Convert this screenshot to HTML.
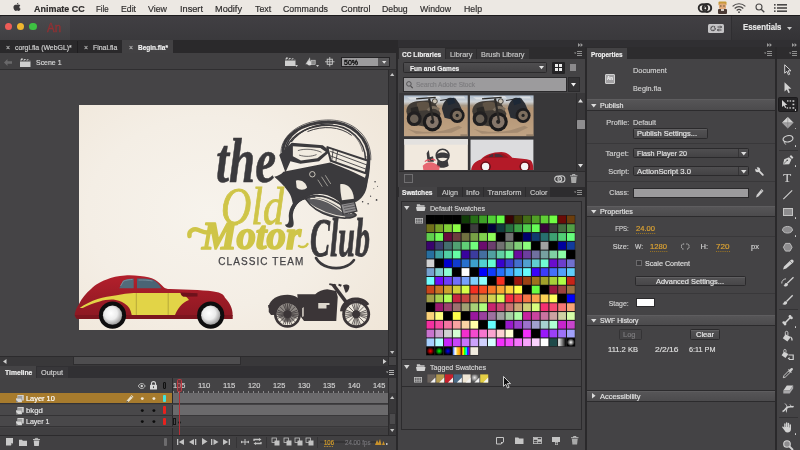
<!DOCTYPE html>
<html><head><meta charset="utf-8"><title>Animate CC</title>
<style>
html,body{margin:0;padding:0;}
body{width:800px;height:450px;overflow:hidden;position:relative;background:#444345;font-family:"Liberation Sans",sans-serif;font-size:7px;color:#d8d8d8;}
.a{position:absolute;box-sizing:border-box;}
.t{position:absolute;white-space:nowrap;line-height:1;-webkit-text-stroke:.18px currentColor;}
#root{position:absolute;left:0;top:0;width:800px;height:450px;overflow:hidden;will-change:transform;}
.b{font-weight:bold;}
svg{position:absolute;overflow:visible;}
.hdr{position:absolute;height:11px;background:linear-gradient(#565557,#4c4b4d);border-top:1px solid #5e5d5f;border-bottom:1px solid #2c2b2d;box-sizing:border-box;}
.btn{position:absolute;box-sizing:border-box;background:linear-gradient(#535254,#474648);border:1px solid #2b2a2c;border-radius:1.5px;box-shadow:inset 0 1px 0 #605f61;}
.dd{position:absolute;box-sizing:border-box;background:linear-gradient(#4f4e50,#434244);border:1px solid #2b2a2c;border-radius:1.5px;}
.ln{position:absolute;height:1px;background:#39383a;}
</style></head><body><div id="root">

<div class="a" style="left:0;top:0;width:800px;height:15px;background:#ece8e3;"></div>
<svg style="left:12.500px;top:2px;" width="8" height="10" viewBox="0 0 9 10"><path d="M6.1 0.2c0 .9-.8 1.9-1.7 1.9C4.3 1.2 5.200 .3 6.100 .2zM4.500 2.600c.5 0 1-.4 1.800-.4.7 0 1.400.3 1.900 1C6.700 4.100 6.900 6.300 8.500 6.900c-.3.900-1.100 2.500-2.100 2.500-.6 0-.9-.4-1.700-.4-.8 0-1.100.4-1.700.4C1.800 9.400.5 7.100.5 5.300.5 3.500 1.700 2.400 2.800 2.400c.7 0 1.300.2 1.700.2z" fill="#3c3a3b"/></svg>
<span class="t b" style="left:33.75px;top:3.78px;font-size:9.60px;color:#2e2c2c;transform:scaleX(0.933);transform-origin:0 50%;">Animate CC</span>
<span class="t" style="left:96.25px;top:3.78px;font-size:9.60px;color:#2e2c2c;transform:scaleX(0.824);transform-origin:0 50%;">File</span>
<span class="t" style="left:121.00px;top:3.78px;font-size:9.60px;color:#2e2c2c;transform:scaleX(0.907);transform-origin:0 50%;">Edit</span>
<span class="t" style="left:148.00px;top:3.78px;font-size:9.60px;color:#2e2c2c;transform:scaleX(0.921);transform-origin:0 50%;">View</span>
<span class="t" style="left:179.50px;top:3.78px;font-size:9.60px;color:#2e2c2c;transform:scaleX(0.958);transform-origin:0 50%;">Insert</span>
<span class="t" style="left:215.00px;top:3.78px;font-size:9.60px;color:#2e2c2c;transform:scaleX(0.955);transform-origin:0 50%;">Modify</span>
<span class="t" style="left:254.50px;top:3.78px;font-size:9.60px;color:#2e2c2c;transform:scaleX(0.923);transform-origin:0 50%;">Text</span>
<span class="t" style="left:283.00px;top:3.78px;font-size:9.60px;color:#2e2c2c;transform:scaleX(0.917);transform-origin:0 50%;">Commands</span>
<span class="t" style="left:340.50px;top:3.78px;font-size:9.60px;color:#2e2c2c;transform:scaleX(0.953);transform-origin:0 50%;">Control</span>
<span class="t" style="left:381.75px;top:3.78px;font-size:9.60px;color:#2e2c2c;transform:scaleX(0.910);transform-origin:0 50%;">Debug</span>
<span class="t" style="left:420.00px;top:3.78px;font-size:9.60px;color:#2e2c2c;transform:scaleX(0.908);transform-origin:0 50%;">Window</span>
<span class="t" style="left:463.75px;top:3.78px;font-size:9.60px;color:#2e2c2c;transform:scaleX(0.912);transform-origin:0 50%;">Help</span>
<svg style="left:698px;top:3px;" width="14" height="10" viewBox="0 0 14 10"><ellipse cx="5" cy="5" rx="4.3" ry="3.800" fill="none" stroke="#2c2a2a" stroke-width="1.900"/><ellipse cx="9" cy="5" rx="4.200" ry="4" fill="none" stroke="#2c2a2a" stroke-width="2"/><circle cx="7.500" cy="5.200" r="1.600" fill="none" stroke="#2c2a2a" stroke-width="1.100"/></svg>
<svg style="left:717px;top:1px;" width="11" height="13" viewBox="0 0 11 13"><rect x="1.500" y="0.500" width="8" height="4" rx="1" fill="#c89a3a"/><rect x="2" y="2.500" width="7" height="5.500" rx="1.500" fill="#e0a878"/><rect x="1" y="8" width="9" height="5" rx="1" fill="#4a3a34"/><rect x="3.200" y="4.500" width="1.200" height="1" fill="#332"/><rect x="6.400" y="4.500" width="1.200" height="1" fill="#332"/><rect x="4" y="8" width="3" height="2" fill="#d8d0c8"/></svg>
<svg style="left:732px;top:3px;" width="14" height="10" viewBox="0 0 14 10"><path d="M0.600 3.400A9 9 0 0 1 13.400 3.400" fill="none" stroke="#4a4848" stroke-width="1.200"/><path d="M2.700 5.500A6 6 0 0 1 11.300 5.500" fill="none" stroke="#4a4848" stroke-width="1.200"/><path d="M4.700 7.500A3.300 3.300 0 0 1 9.300 7.500" fill="none" stroke="#4a4848" stroke-width="1.200"/><circle cx="7" cy="9.200" r=".9" fill="#4a4848"/></svg>
<svg style="left:755px;top:3px;" width="10" height="10" viewBox="0 0 10 10"><circle cx="4" cy="4" r="3" fill="none" stroke="#4a4848" stroke-width="1.100"/><path d="M6.200 6.200L9.300 9.300" stroke="#4a4848" stroke-width="1.300"/></svg>
<svg style="left:773.500px;top:4px;" width="13" height="8" viewBox="0 0 13 8"><g fill="#4a4848"><rect x="0" y="0" width="1.600" height="1.600"/><rect x="3" y="0" width="10" height="1.600"/><rect x="0" y="3.200" width="1.600" height="1.600"/><rect x="3" y="3.200" width="10" height="1.600"/><rect x="0" y="6.400" width="1.600" height="1.600"/><rect x="3" y="6.400" width="10" height="1.600"/></g></svg>
<div class="a" style="left:0;top:15px;width:800px;height:25px;background:linear-gradient(#413f43,#3a393c);border-top:1px solid #1c1b1d;"></div>
<div class="a" style="left:0;top:16px;width:70px;height:24px;background:linear-gradient(#4b4a4d,#403f42);border-top-left-radius:3px;"></div>
<div class="a" style="left:731px;top:16px;width:69px;height:24px;background:linear-gradient(#3c3b3e,#343336);border-left:1px solid #2f2e31;border-top-right-radius:3px;"></div>
<div class="a" style="left:4.5px;top:22.600px;width:7.800px;height:7.800px;border-radius:50%;background:#ee5c57;"></div>
<div class="a" style="left:16.7px;top:22.600px;width:7.800px;height:7.800px;border-radius:50%;background:#f0b62e;"></div>
<div class="a" style="left:29.2px;top:22.600px;width:7.800px;height:7.800px;border-radius:50%;background:#3ec242;"></div>
<span class="t" style="left:47.00px;top:21.72px;font-size:12.60px;color:#933033;transform:scaleX(0.908);transform-origin:0 50%;-webkit-text-stroke:.35px #933033;">An</span>
<svg style="left:708px;top:23.500px;" width="16" height="9" viewBox="0 0 16 9"><rect x="0" y="0" width="16" height="9" rx="1.500" fill="#c4c3c5"/><circle cx="5" cy="4.500" r="2.100" fill="none" stroke="#3a393b" stroke-width="1.300" stroke-dasharray="1.100 .55"/><path d="M9.500 3h4M12.300 1.700l1.300 1.300-1.300 1.300M13.500 6h-4M10.700 4.700L9.400 6l1.300 1.300" stroke="#3a393b" stroke-width=".9" fill="none"/></svg>
<span class="t b" style="left:742.50px;top:24.06px;font-size:8.20px;color:#e6e6e6;transform:scaleX(0.949);transform-origin:0 50%;">Essentials</span>
<svg style="left:787px;top:27px;" width="5" height="3" viewBox="0 0 5 3"><path d="M0 0h5L2.500 3z" fill="#c8c8c8"/></svg>
<div class="a" style="left:0px;top:40px;width:800px;height:8.2px;background:#302f32;border-bottom:1px solid #222123;"></div>
<div class="a" style="left:0px;top:40px;width:398px;height:13px;background:#2a292b;"></div>
<div class="a" style="left:122px;top:40px;width:50.5px;height:13px;background:#424143;"></div>
<div class="a" style="left:77px;top:40.5px;width:1px;height:12.5px;background:#1f1e20;"></div>
<span class="t" style="left:6.00px;top:44.69px;font-size:6.50px;color:#bdbdbd;transform:scaleX(1.054);transform-origin:0 50%;">×</span>
<span class="t" style="left:15.00px;top:43.80px;font-size:7.50px;color:#d2d2d2;transform:scaleX(0.922);transform-origin:0 50%;">corgi.fla (WebGL)*</span>
<span class="t" style="left:83.50px;top:44.69px;font-size:6.50px;color:#bdbdbd;transform:scaleX(1.054);transform-origin:0 50%;">×</span>
<span class="t" style="left:92.50px;top:43.80px;font-size:7.50px;color:#d2d2d2;transform:scaleX(0.923);transform-origin:0 50%;">Final.fla</span>
<span class="t" style="left:128.50px;top:44.69px;font-size:6.50px;color:#bdbdbd;transform:scaleX(1.054);transform-origin:0 50%;">×</span>
<span class="t b" style="left:138.00px;top:43.80px;font-size:7.50px;color:#f2f2f2;transform:scaleX(0.867);transform-origin:0 50%;">Begin.fla*</span>
<svg style="left:578px;top:42.500px;" width="5" height="4" viewBox="0 0 5 4"><path d="M0 0l2.300 2L0 4zM2.600 0l2.300 2-2.300 2z" fill="#9c9c9c"/></svg>
<svg style="left:767px;top:42.500px;" width="5" height="4" viewBox="0 0 5 4"><path d="M0 0l2.300 2L0 4zM2.600 0l2.300 2-2.300 2z" fill="#9c9c9c"/></svg>
<svg style="left:792px;top:42.500px;" width="5" height="4" viewBox="0 0 5 4"><path d="M0 0l2.300 2L0 4zM2.600 0l2.300 2-2.300 2z" fill="#9c9c9c"/></svg>
<div class="a" style="left:0px;top:53px;width:398px;height:17px;background:#414042;border-bottom:1px solid #2f2e30;"></div>
<svg style="left:3.500px;top:59px;" width="8" height="7" viewBox="0 0 8 7"><path d="M0 3.500L3.500 0v2.200H8v2.600H3.500V7z" fill="#6a696b"/></svg>
<svg style="left:20px;top:58px;" width="10.500" height="9" viewBox="0 0 10.500 9"><g fill="#cfcfcf"><path d="M0 3.200h10.500V9H0z"/><path d="M0 2.600L1.500 .3l1.700.5L2 2.600zM3 2.600L4.400 .9l1.700.4-1.200 1.300zM6 2.600l1.300-1.300 1.700.4-1 .9zM9 2.600l1-.7.500.700z"/></g><path d="M0 3.200h10.500" stroke="#414042" stroke-width=".5"/></svg>
<span class="t" style="left:36.25px;top:58.80px;font-size:7.50px;color:#d6d6d6;transform:scaleX(0.927);transform-origin:0 50%;">Scene 1</span>
<svg style="left:284.500px;top:57px;" width="10.500" height="9" viewBox="0 0 10.500 9"><g fill="#cfcfcf"><path d="M0 3.200h10.500V9H0z"/><path d="M0 2.600L1.500 .3l1.700.5L2 2.600zM3 2.600L4.400 .9l1.700.4-1.200 1.300zM6 2.600l1.300-1.300 1.700.4-1 .9zM9 2.600l1-.7.500.700z"/></g><path d="M0 3.200h10.500" stroke="#414042" stroke-width=".5"/></svg>
<svg style="left:295px;top:65px;" width="3" height="2" viewBox="0 0 3 2"><path d="M0 0h3L1.500 2z" fill="#c8c8c8"/></svg>
<svg style="left:304.500px;top:57px;" width="11" height="9" viewBox="0 0 11 9"><path d="M5 .3L.4 7.300h5.200z" fill="#bdbdbd"/><circle cx="4.500" cy="6.300" r="2.300" fill="#d8d8d8"/><rect x="6" y="3.200" width="4.200" height="4.200" fill="#8a8a8a" stroke="#d0d0d0" stroke-width=".6"/></svg>
<svg style="left:316px;top:65px;" width="3" height="2" viewBox="0 0 3 2"><path d="M0 0h3L1.500 2z" fill="#c8c8c8"/></svg>
<svg style="left:324.500px;top:57px;" width="9.500" height="9.500" viewBox="0 0 9.500 9.500"><rect x="2.200" y="2.200" width="5.100" height="5.100" fill="none" stroke="#cfcfcf" stroke-width=".9"/><path d="M4.750 0v9.500M0 4.750h9.500" stroke="#cfcfcf" stroke-width=".8"/></svg>
<div class="a" style="left:341px;top:56.6px;width:37.5px;height:10.8px;background:#9c9b9d;border:1px solid #252426;"></div>
<span class="t" style="left:344.00px;top:59.15px;font-size:7.40px;color:#101010;transform:scaleX(0.945);transform-origin:0 50%;-webkit-text-stroke:.4px #101010;">50%</span>
<div class="a" style="left:378px;top:56.6px;width:11.5px;height:10.8px;background:#59585a;border:1px solid #252426;border-left:none;"></div>
<svg style="left:381.800px;top:60.800px;" width="4.400" height="2.800" viewBox="0 0 5 3"><path d="M0 0h5L2.500 3z" fill="#e0e0e0"/></svg>
<div class="a" style="left:0px;top:70px;width:388px;height:286px;background:#454446;"></div>
<div class="a" style="left:79px;top:104.500px;width:308.500px;height:225px;background:radial-gradient(ellipse 78% 85% at 42% 48%,#f7f3ec 0%,#f4eee5 50%,#efe5d7 100%);">
<!-- artwork inside canvas; page coordinates via viewBox -->
<svg style="left:0;top:-.5px;" width="309" height="226" viewBox="79 104 309 226">
  <defs>
    <linearGradient id="carred" x1="0" y1="0" x2="0" y2="1"><stop offset="0" stop-color="#b3202c"/><stop offset=".45" stop-color="#a01c27"/><stop offset="1" stop-color="#8a1822"/></linearGradient>
    <radialGradient id="hub" cx=".42" cy=".4" r=".6"><stop offset="0" stop-color="#ffffff"/><stop offset=".55" stop-color="#ececec"/><stop offset="1" stop-color="#9f9e9e"/></radialGradient>
  </defs>

  <!-- helmet head: drawn in 4.017x zoom units -->
  <g transform="translate(268 114) scale(.249)">
    <g fill="none" stroke="#3b3a3d" stroke-linecap="round">
      <path d="M60 150C60 90 130 35 240 32c100-2 165 68 165 148 0 60-10 100-25 130" stroke-width="12"/>
      <path d="M75 135C100 75 170 45 245 45c85 0 145 60 147 140" stroke-width="6"/>
      <path d="M160 70c60-25 130-20 175 15" stroke-width="4"/>
      <path d="M95 110c35-50 105-72 165-70" stroke-width="5"/>
      <path d="M398 170c6 50-4 100-28 135" stroke-width="4"/>
      <path d="M52 160C48 100 110 28 235 24c110-4 182 70 178 160" stroke-width="3"/>
      <path d="M110 95c40-45 110-60 170-45 50 12 90 50 100 100" stroke-width="2.500"/>
      <path d="M68 150c4-30 20-60 50-82" stroke-width="6"/>
    </g>
    <!-- face -->
    <path d="M62 232L250 195l12 5c38 15 88 35 138 62 0 43-15 73-45 90l-60 10-15-14c-20-13-50-30-80-26-20 0-40 8-50 18-20 8-38 22-45 42L95 340C90 318 70 292 25 252c15-4 30-10 37-20z" fill="#3b3a3d"/>
    <path d="M112 268c17-7 40 5 45 27-10 12-32 12-42 0z" fill="#efe9de"/>
    <circle cx="178" cy="242" r="11" fill="none" stroke="#d9d3c8" stroke-width="3.500"/>
    <path d="M215 252l25 38M230 246l22 35M200 264l18 28" stroke="#d9d3c8" stroke-width="2.500" fill="none"/>
    <path d="M290 282c25-5 52 15 55 58l-48 6c-5-23-7-41-7-64z" fill="#efe9de"/>
    <!-- goggles -->
    <path d="M45 165l50-50 125 10 30 25-45 40-75 10-40-10-20 45z" fill="#3b3a3d"/>
    <path d="M100 130l110 7 22 15-34 26-66 9-32-17z" fill="#f1ebe0"/>
    <path d="M120 147c30-10 70-5 95 7M125 165c25 8 50 6 70-2" stroke="#3b3a3d" stroke-width="3" fill="none"/>
    <path d="M238 133l164 55-10 50-140-50z" fill="#f1ebe0" stroke="#3b3a3d" stroke-width="8" stroke-linejoin="round"/>
    <path d="M250 150l148 55M250 168l145 54M262 140l-6 48M280 148l-8 46" stroke="#3b3a3d" stroke-width="3.500" fill="none"/>
    <!-- mustache -->
    <path d="M150 340c40-27 100-7 150 28 25 18 45 30 55 38-15 14-55 17-105 4-40-12-75-32-100-70z" fill="#5a595c"/>
    <path d="M170 340c40-5 90 20 140 62M190 334c45 2 90 30 135 66M160 356c40 30 90 50 150 58M210 332c40 8 85 38 125 68" stroke="#ece6db" stroke-width="4.500" fill="none"/>
    <path d="M150 340c40-27 100-7 150 28 25 18 45 30 55 38" stroke="#3b3a3d" stroke-width="7" fill="none"/>
    <path d="M355 406c-15 14-55 17-105 4-40-12-75-32-100-70" stroke="#3b3a3d" stroke-width="6" fill="none"/>
    <path d="M150 340c-25 8-45 28-50 63-2 20 8 37 0 49-10 8-28 6-32-7 12 0 17-10 16-25-4-30 11-65 41-82z" fill="#3b3a3d"/>
    <path d="M150 336c-20 2-45 20-55 50" stroke="#3b3a3d" stroke-width="12" fill="none"/>
    <!-- buckle -->
    <path d="M292 362l55-10 10 38-55 13z" fill="#8f8d8f" stroke="#3b3a3d" stroke-width="5"/>
    <path d="M302 369l46-9M305 379l46-9M308 389l46-9" stroke="#3b3a3d" stroke-width="2.500"/>
    <g fill="#3b3a3d"><circle cx="430" cy="272" r="3"/><circle cx="436" cy="345" r="3.500"/><circle cx="402" cy="360" r="3"/><circle cx="425" cy="300" r="2"/><circle cx="412" cy="330" r="2.500"/><circle cx="380" cy="352" r="3"/><circle cx="440" cy="290" r="2"/></g>
  </g>

  <!-- car -->
  <g>
    <path d="M74.700 313.700C76 309 77 307 78.500 305c3.500-7 7.500-12 12.500-16 5-5 9-7 15-9.300 6-2.700 12-4.100 19-4.300 5-.2 10-.1 15 .6 6 .6 11 1.600 15 3.700 3 1.800 6 4.300 8.500 7.300 1.500 1.500 3.500 2 6.500 2l27.500 1c7.500.5 14.500 1 21.200 2.400 3.300 1.100 5.300 2.600 6.300 5.300 3 3.300 5.500 6.800 6.500 10.300 1 3 1.300 5.500 1 7.800-1 1.700-3 2.700-5.500 3.200H77c-1.500-1-2.500-3-2.300-5.300z" fill="url(#carred)"/>
    <path d="M79.600 307.900C85 304.500 91 301 97.600 299c6-1.800 12.500-3 19.100-3.800 5.500-1 11.300-1.700 17-2.100H180.500c3.300 1.600 6.300 3.800 8.500 6.800-6.500 2.300-12.500 9-14.900 18H132c-.2-5-1.800-9.300-4.600-12.100-3.100-3.300-7.300-5.300-11.700-5.900-5.300-.7-10.700-.1-16 1.700-5.800 1.700-11.500 3.700-17 6.300z" fill="#e2d447"/>
    <path d="M119.300 288.200L123 280.700c3-1.400 7-2.100 10.700-2.100v9.600z" fill="#526b7a"/>
    <path d="M137 278.600c6-.2 11 .1 15.900 1.100 3.500 2 6.500 4.500 8.500 8.500H137z" fill="#4a6475"/>
    <path d="M120.500 286l3-5c3-1 6-1.500 9-1.500M138.500 280c5 0 10 0 14 1" stroke="#7f98a6" stroke-width=".8" fill="none"/>
    <path d="M136.300 293.100v21.300a2 2 0 0 0 2 2h27.900a2 2 0 0 0 2-2V293.100" fill="none" stroke="#9a8c30" stroke-width=".6"/>
    <path d="M180.500 292.500l17 .8v3.200l-14 .3c-2-1-3-2.500-3-4.300z" fill="#6d121b"/>
    <path d="M74.700 315h158v4H77z" fill="#7c151e"/>
    <circle cx="112.500" cy="315.200" r="13.600" fill="#0e0d0e"/>
    <circle cx="210.700" cy="315.200" r="13.600" fill="#0e0d0e"/>
    <circle cx="112.500" cy="315.200" r="9.600" fill="url(#hub)"/>
    <circle cx="210.700" cy="315.200" r="9.600" fill="url(#hub)"/>
  </g>

  <!-- motorcycle: drawn in 6.667x zoom units -->
  <g transform="translate(262 276) scale(.15)">
    <g fill="#3b3537">
      <circle cx="170" cy="255" r="90"/>
      <circle cx="628" cy="255" r="93"/>
      <path d="M45 200c10-45 60-75 125-75 50 0 90 25 100 70l-30 60-180 5-15-20z"/>
      <path d="M235 122h120c20-20 50-32 80-34l60 12 10 40-10 160H280l-30-40z"/>
      <path d="M462 62l22-10 150 200-22 10z"/>
      <path d="M450 48l45 8-3 12-45-8z"/>
      <path d="M512 52l20 6-6 14-18-8z"/>
      <path d="M540 62c15-8 38-5 42 5 2 20-10 42-25 45z"/>
      <path d="M520 235c5-50 45-90 100-92 40-2 80 15 95 45l-18 10c-15-22-45-35-78-33-40 2-68 32-75 72z"/>
      <path d="M40 195l12-4 4 18-12 4z"/>
    </g>
    <circle cx="170" cy="255" r="72" fill="#efe9de"/>
    <circle cx="628" cy="255" r="74" fill="#efe9de"/>
    <g stroke="#3b3537" stroke-width="5" fill="none">
      <path d="M170 183v144M98 255h144M119 204l102 102M221 204L119 306M142 189l56 132M198 189l-56 132M104 227l132 56M104 283l132-56M155 185l30 140M185 185l-30 140M100 240l140 30M100 270l140-30"/>
      <path d="M628 181v148M554 255h148M576 203l104 104M680 203L576 307M600 187l56 136M656 187l-56 136M560 227l136 56M560 283l136-56M613 183l30 144M643 183l-30 144M556 240l144 30M556 270l144-30"/>
    </g>
    <path d="M98 255a72 72 0 0 1 144 0v10l-40 40h-60z" fill="#3b3537" opacity=".55"/>
    <circle cx="170" cy="255" r="26" fill="#3b3537"/>
    <circle cx="628" cy="255" r="26" fill="#3b3537"/>
    <path d="M375 180h75v14h-20v22h-55z" fill="#efe9de" opacity=".9"/>
    <path d="M268 215l10-8v62l-10 4z" fill="#efe9de" opacity=".9"/>
    <path d="M135 318h60v8h-60z" fill="#efe9de" opacity=".5"/>
  </g>

  <!-- lettering -->
  <g font-family="'Liberation Serif',serif" font-style="italic" font-weight="bold">
    <text x="216" y="181.500" font-size="64" fill="#3b3a3d" stroke="#3b3a3d" stroke-width=".6" textLength="60" lengthAdjust="spacingAndGlyphs">the</text>
    <text x="221" y="224" font-size="53" font-weight="normal" fill="#cfc548" stroke="#cfc548" stroke-width=".9" textLength="63" lengthAdjust="spacingAndGlyphs">Old</text>
    <text x="202" y="248.500" font-size="40" fill="#cfc548" stroke="#cfc548" stroke-width="1.700" stroke-linejoin="round" textLength="99" lengthAdjust="spacingAndGlyphs">Motor</text>
    <text x="310" y="256" font-size="55" fill="#3b3a3d" stroke="#3b3a3d" stroke-width=".9" textLength="60" lengthAdjust="spacingAndGlyphs">Club</text>
  </g>
  <!-- decorative swashes -->
  <g fill="none" stroke-linecap="round">
    <path d="M189.500 236c-1-5 4-8 9-6 4 1.500 7 4 12 2" stroke="#cfc548" stroke-width="4.500"/>
    <path d="M299 246c3 2 7 1 8.500-2" stroke="#cfc548" stroke-width="2.500"/>
    <path d="M316 258c5 9 18 12 28 9 5-1.500 8-4 10-7" stroke="#3b3a3d" stroke-width="2.600"/>
    
  </g>
  <text x="218.300" y="265.100" font-family="'Liberation Sans',sans-serif" font-size="10" fill="#454447" stroke="#454447" stroke-width=".25" textLength="85" lengthAdjust="spacing">CLASSIC TEAM</text>
</svg>

</div>
<div class="a" style="left:388px;top:70px;width:8.5px;height:286px;background:#39383a;border-left:1px solid #2c2b2d;"></div>
<svg style="left:390px;top:73px;" width="4.400" height="3" viewBox="0 0 5 3.500"><path d="M0 3.500h5L2.500 0z" fill="#c4c4c4"/></svg>
<svg style="left:390px;top:351px;" width="4.400" height="3" viewBox="0 0 5 3.500"><path d="M0 0h5L2.500 3.500z" fill="#c4c4c4"/></svg>
<div class="a" style="left:0px;top:356px;width:396.5px;height:9.5px;background:#39383a;border-top:1px solid #2c2b2d;"></div>
<div class="a" style="left:72.5px;top:357px;width:168px;height:8px;background:#4e4d4f;border:1px solid #2e2d2f;border-top:none;"></div>
<svg style="left:2.500px;top:358.500px;" width="3.500" height="5" viewBox="0 0 3.500 5"><path d="M3.500 0v5L0 2.500z" fill="#d0d0d0"/></svg>
<svg style="left:382.500px;top:358.500px;" width="3.500" height="5" viewBox="0 0 3.500 5"><path d="M0 0v5L3.500 2.500z" fill="#d0d0d0"/></svg>
<div class="a" style="left:388px;top:356px;width:8.5px;height:9.5px;background:#454446;border:1px solid #2c2b2d;"></div>
<div class="a" style="left:0px;top:365.5px;width:398px;height:12px;background:#313033;"></div>
<div class="a" style="left:0px;top:366px;width:36px;height:11.5px;background:#444345;"></div>
<div class="a" style="left:36.5px;top:366.5px;width:31px;height:11px;background:#38373a;"></div>
<span class="t b" style="left:4.50px;top:368.60px;font-size:7.50px;color:#f0f0f0;transform:scaleX(0.900);transform-origin:0 50%;">Timeline</span>
<span class="t" style="left:40.50px;top:368.60px;font-size:7.50px;color:#cfcfcf;transform:scaleX(0.977);transform-origin:0 50%;">Output</span>
<svg style="left:385.500px;top:369.500px;" width="8" height="5" viewBox="0 0 8 5"><path d="M0 1.500h2.400L1.200 3z" fill="#bdbdbd"/><path d="M3 .5h5M3 2.500h5M3 4.500h5" stroke="#bdbdbd" stroke-width=".9"/></svg>
<div class="a" style="left:0px;top:377.5px;width:398px;height:15.5px;background:#434244;"></div>
<svg style="left:138px;top:382.500px;" width="7.500" height="6" viewBox="0 0 7.500 6"><path d="M.3 3C1.500 1 2.600.5 3.750.5S6 1 7.200 3C6 5 4.900 5.500 3.750 5.500S1.500 5 .3 3z" fill="none" stroke="#d4d4d4" stroke-width=".8"/><circle cx="3.750" cy="3" r="1.200" fill="#d4d4d4"/></svg>
<svg style="left:150px;top:381px;" width="7" height="8.500" viewBox="0 0 7 8.500"><path d="M1.500 4V2.600a2 2 0 0 1 4 0V4" fill="none" stroke="#d8d8d8" stroke-width="1.100"/><rect x="0" y="3.800" width="7" height="4.700" rx=".6" fill="#d8d8d8"/><rect x="3" y="5.300" width="1" height="1.800" fill="#444"/></svg>
<div class="a" style="left:162.5px;top:381.8px;width:3.8px;height:7.4px;background:#39383a;border:.8px solid #111;border-radius:1px;"></div>
<div class="a" style="left:172px;top:377.5px;width:216px;height:15.5px;background:#444345;border-left:1px solid #2c2b2d;"></div>
<span class="t" style="left:173.00px;top:382.10px;font-size:7.50px;color:#d0d0d0;transform:scaleX(0.983);transform-origin:0 50%;">105</span>
<span class="t" style="left:198.00px;top:382.10px;font-size:7.50px;color:#d0d0d0;transform:scaleX(1.029);transform-origin:0 50%;">110</span>
<span class="t" style="left:223.00px;top:382.10px;font-size:7.50px;color:#d0d0d0;transform:scaleX(1.029);transform-origin:0 50%;">115</span>
<span class="t" style="left:248.00px;top:382.10px;font-size:7.50px;color:#d0d0d0;transform:scaleX(0.983);transform-origin:0 50%;">120</span>
<span class="t" style="left:273.00px;top:382.10px;font-size:7.50px;color:#d0d0d0;transform:scaleX(0.983);transform-origin:0 50%;">125</span>
<span class="t" style="left:298.00px;top:382.10px;font-size:7.50px;color:#d0d0d0;transform:scaleX(0.983);transform-origin:0 50%;">130</span>
<span class="t" style="left:323.00px;top:382.10px;font-size:7.50px;color:#d0d0d0;transform:scaleX(0.983);transform-origin:0 50%;">135</span>
<span class="t" style="left:348.00px;top:382.10px;font-size:7.50px;color:#d0d0d0;transform:scaleX(0.983);transform-origin:0 50%;">140</span>
<span class="t" style="left:373.00px;top:382.10px;font-size:7.50px;color:#d0d0d0;transform:scaleX(0.983);transform-origin:0 50%;">145</span>
<div class="a" style="left:173px;top:391px;width:215px;height:1.500px;background:repeating-linear-gradient(90deg,#8a898b 0,#8a898b 1px,transparent 1px,transparent 5px);"></div>
<div class="a" style="left:0px;top:392.5px;width:398px;height:0.8px;background:#2c2b2d;"></div>
<div class="a" style="left:0px;top:393px;width:172px;height:11px;background:#a77b2d;border-bottom:1px solid #343335;"></div>
<svg style="left:15.8px;top:395px;" width="7.800" height="7.200" viewBox="0 0 8.500 8"><path d="M1.500 0h7v6h-2v2H0V3.500h1.500z" fill="#d8d8d8"/><path d="M1.500 3.500h5V6M2 1.500h5M2 2.500h5" stroke="#555" stroke-width=".5" fill="none"/><path d="M0 5.500l2.500 2.500H0z" fill="#777"/></svg>
<span class="t" style="left:25.75px;top:395.20px;font-size:7.50px;color:#ffffff;transform:scaleX(0.985);transform-origin:0 50%;">Layer 10</span>
<svg style="left:140px;top:396px;" width="16" height="5" viewBox="0 0 16 5"><circle cx="2.300" cy="2.600" r="1.450" fill="#f0ead8"/><circle cx="13.900" cy="2.600" r="1.450" fill="#f0ead8"/></svg>
<div class="a" style="left:162.5px;top:394.7px;width:3.8px;height:7.6px;background:#43e3dc;border-radius:1px;"></div>
<div class="a" style="left:172px;top:393px;width:216px;height:11px;background:#6b6a6c;border-bottom:1px solid #39383a;border-left:1px solid #2c2b2d;"></div>
<div class="a" style="left:0px;top:404.5px;width:172px;height:11px;background:#49484a;border-bottom:1px solid #343335;"></div>
<svg style="left:15.8px;top:406.5px;" width="7.800" height="7.200" viewBox="0 0 8.500 8"><path d="M1.500 0h7v6h-2v2H0V3.500h1.500z" fill="#d8d8d8"/><path d="M1.500 3.500h5V6M2 1.500h5M2 2.500h5" stroke="#555" stroke-width=".5" fill="none"/><path d="M0 5.500l2.500 2.500H0z" fill="#777"/></svg>
<span class="t" style="left:25.75px;top:406.70px;font-size:7.50px;color:#e4e4e4;transform:scaleX(1.030);transform-origin:0 50%;">bkgd</span>
<svg style="left:140px;top:407.5px;" width="16" height="5" viewBox="0 0 16 5"><circle cx="2.300" cy="2.600" r="1.450" fill="#0c0c0c"/><circle cx="13.900" cy="2.600" r="1.450" fill="#0c0c0c"/></svg>
<div class="a" style="left:162.5px;top:406.2px;width:3.8px;height:7.6px;background:#e8221e;border-radius:1px;"></div>
<div class="a" style="left:172px;top:404.5px;width:216px;height:11px;background:#6b6a6c;border-bottom:1px solid #39383a;border-left:1px solid #2c2b2d;"></div>
<div class="a" style="left:0px;top:416px;width:172px;height:11px;background:#49484a;border-bottom:1px solid #343335;"></div>
<svg style="left:15.8px;top:418px;" width="7.800" height="7.200" viewBox="0 0 8.500 8"><path d="M1.500 0h7v6h-2v2H0V3.500h1.500z" fill="#d8d8d8"/><path d="M1.500 3.500h5V6M2 1.500h5M2 2.500h5" stroke="#555" stroke-width=".5" fill="none"/><path d="M0 5.500l2.500 2.500H0z" fill="#777"/></svg>
<span class="t" style="left:25.75px;top:418.20px;font-size:7.50px;color:#e4e4e4;transform:scaleX(0.939);transform-origin:0 50%;">Layer 1</span>
<svg style="left:140px;top:419px;" width="16" height="5" viewBox="0 0 16 5"><circle cx="2.300" cy="2.600" r="1.450" fill="#0c0c0c"/><circle cx="13.900" cy="2.600" r="1.450" fill="#0c0c0c"/></svg>
<div class="a" style="left:162.5px;top:417.7px;width:3.8px;height:7.6px;background:#e8221e;border-radius:1px;"></div>
<div class="a" style="left:172px;top:416px;width:216px;height:11px;background:#4a494b;border-bottom:1px solid #39383a;border-left:1px solid #2c2b2d;"></div>
<svg style="left:125.500px;top:394.500px;" width="7.500" height="8" viewBox="0 0 7.500 8"><path d="M5.600 0L7.500 1.900 2.400 7 0 8l.8-2.600z" fill="#e8e0cc"/><path d="M0 8l.8-2.600L2.400 7z" fill="#5a4a2a"/><path d="M4.800 .9l1.800 1.800" stroke="#7a5a1a" stroke-width=".6"/></svg>
<div class="a" style="left:173.3px;top:418.3px;width:2.8px;height:6.4px;background:transparent;border:.8px solid #161616;"></div>
<div class="a" style="left:178px;top:421px;width:3px;height:3px;border-radius:50%;border:.8px solid #161616;"></div>
<div class="a" style="left:0px;top:427.5px;width:398px;height:7px;background:#403f41;"></div>
<div class="a" style="left:172px;top:427.5px;width:1px;height:7px;background:#2c2b2d;"></div>
<div class="a" style="left:177px;top:378.8px;width:5.2px;height:13px;background:rgba(150,38,48,.5);border:1px solid #c03a42;border-radius:1.500px;"></div>
<div class="a" style="left:179.2px;top:391.5px;width:1px;height:43px;background:#b52e36;"></div>
<div class="a" style="left:388px;top:377.5px;width:8.5px;height:57px;background:#39383a;border-left:1px solid #2c2b2d;"></div>
<div class="a" style="left:388px;top:377.5px;width:8.5px;height:15.5px;background:#434244;border-left:1px solid #2c2b2d;"></div>
<div class="a" style="left:389.2px;top:412.8px;width:6.8px;height:11.8px;background:#4b4a4c;border:1px solid #353436;"></div>
<svg style="left:390px;top:395.500px;" width="4.400" height="3" viewBox="0 0 5 3.500"><path d="M0 3.500h5L2.500 0z" fill="#c4c4c4"/></svg>
<svg style="left:390px;top:429px;" width="4.400" height="3" viewBox="0 0 5 3.500"><path d="M0 0h5L2.500 3.500z" fill="#c4c4c4"/></svg>
<div class="a" style="left:0px;top:434.5px;width:398px;height:15.5px;background:#414042;border-top:1px solid #2c2b2d;"></div>
<svg style="left:5.500px;top:438px;" width="7" height="7.500" viewBox="0 0 7 7.500"><path d="M0 0h7v5.500H5v2H0z" fill="#c9c9c9"/><path d="M5 5.500h2L5 7.500z" fill="#777"/></svg>
<svg style="left:18.500px;top:438.500px;" width="8" height="7" viewBox="0 0 8 7"><path d="M0 .8h3l.8 1H8V7H0z" fill="#c9c9c9"/></svg>
<svg style="left:32.500px;top:437.500px;" width="7" height="8" viewBox="0 0 7 8"><path d="M0 1.500h7M2.300 1.500V.4h2.400v1.100" stroke="#c9c9c9" stroke-width=".9" fill="none"/><path d="M.7 2.500h5.600L5.800 8H1.200z" fill="#c9c9c9"/></svg>
<div class="a" style="left:164px;top:437.5px;width:3.4px;height:8px;background:#6d6c6e;border-radius:1px;"></div>
<div class="a" style="left:172px;top:434.5px;width:1px;height:15.5px;background:#2c2b2d;"></div>
<svg style="left:177px;top:438.500px;" width="7" height="6" viewBox="0 0 7 6"><rect x="0" y="0" width="1.300" height="6" fill="#c2c2c2"/><path d="M7 0v6L1.800 3z" fill="#c2c2c2"/></svg>
<svg style="left:188.500px;top:438.500px;" width="7.500" height="6" viewBox="0 0 7.500 6"><path d="M5 0v6L0 3z" fill="#c2c2c2"/><rect x="6" y="0" width="1.300" height="6" fill="#c2c2c2"/></svg>
<svg style="left:201.500px;top:438px;" width="5.500" height="7" viewBox="0 0 5.500 7"><path d="M0 0l5.500 3.500L0 7z" fill="#c2c2c2"/></svg>
<svg style="left:210.500px;top:438.500px;" width="7.500" height="6" viewBox="0 0 7.500 6"><rect x="0" y="0" width="1.300" height="6" fill="#c2c2c2"/><path d="M2.500 0v6L7.500 3z" fill="#c2c2c2"/></svg>
<svg style="left:223px;top:438.500px;" width="7" height="6" viewBox="0 0 7 6"><path d="M0 0v6L5.200 3z" fill="#c2c2c2"/><rect x="5.700" y="0" width="1.300" height="6" fill="#c2c2c2"/></svg>
<div class="a" style="left:235.5px;top:437px;width:1px;height:11px;background:#353436;"></div>
<svg style="left:240.500px;top:438.500px;" width="8" height="6" viewBox="0 0 8 6"><path d="M0 3h8M4 0v6" stroke="#c2c2c2" stroke-width="1"/><path d="M0 1.500L1.800 3 0 4.500zM8 1.500L6.200 3 8 4.500z" fill="#c2c2c2"/></svg>
<svg style="left:252.500px;top:438px;" width="9" height="7" viewBox="0 0 9 7"><path d="M1 3V1.500h5.500M8 4v1.500H2.500" stroke="#c2c2c2" stroke-width="1.300" fill="none"/><path d="M6 0l2.500 1.500L6 3zM3 4L.5 5.500 3 7z" fill="#c2c2c2"/></svg>
<div class="a" style="left:266px;top:437px;width:1px;height:11px;background:#353436;"></div>
<svg style="left:272px;top:438px;" width="7.500" height="7.500" viewBox="0 0 7.500 7.500"><rect x="0" y="0" width="4.500" height="4.500" fill="none" stroke="#c2c2c2" stroke-width=".8"/><rect x="2.500" y="2.500" width="5" height="5" fill="#c2c2c2"/></svg>
<svg style="left:284px;top:438px;" width="7.500" height="7.500" viewBox="0 0 7.500 7.500"><rect x="0" y="0" width="4.500" height="4.500" fill="none" stroke="#c2c2c2" stroke-width=".8"/><rect x="2.500" y="2.500" width="5" height="5" fill="#c2c2c2"/></svg>
<svg style="left:295px;top:438px;" width="7.500" height="7.500" viewBox="0 0 7.500 7.500"><rect x="0" y="0" width="4.500" height="4.500" fill="none" stroke="#c2c2c2" stroke-width=".8"/><rect x="2.500" y="2.500" width="5" height="5" fill="#c2c2c2"/></svg>
<svg style="left:305.5px;top:438px;" width="7.500" height="7.500" viewBox="0 0 7.500 7.500"><rect x="0" y="0" width="4.500" height="4.500" fill="none" stroke="#c2c2c2" stroke-width=".8"/><rect x="2.500" y="2.500" width="5" height="5" fill="#c2c2c2"/></svg>
<div class="a" style="left:317px;top:437px;width:1px;height:11px;background:#353436;"></div>
<div class="a" style="left:320px;top:441.2px;width:56px;height:1.6px;background:#353436;"></div>
<span class="t" style="left:324.30px;top:438.60px;font-size:7.50px;color:#d9a02a;transform:scaleX(0.800);transform-origin:0 50%;text-decoration:underline dotted;">106</span>
<span class="t" style="left:344.50px;top:438.60px;font-size:7.50px;color:#77767a;transform:scaleX(0.826);transform-origin:0 50%;">24.00 fps</span>
<svg style="left:375px;top:438.500px;" width="12.500" height="6" viewBox="0 0 12.500 6"><path d="M0 6L2 1l1.500 3L5 0l1.500 6zM7 6l1.500-4L10 6z" fill="#c8912a"/><rect x="11" y="4" width="1.500" height="2" fill="#bdbdbd"/></svg>
<div class="a" style="left:397.8px;top:47px;width:187.7px;height:403px;background:#444345;"></div>
<div class="a" style="left:398px;top:47px;width:187.5px;height:12px;background:#2d2c2e;"></div>
<div class="a" style="left:398.5px;top:48.2px;width:46.5px;height:10.8px;background:#444345;"></div>
<div class="a" style="left:445.5px;top:48.6px;width:83px;height:10.4px;background:#373638;"></div>
<div class="a" style="left:476px;top:48.6px;width:1px;height:10.4px;background:#2d2c2e;"></div>
<span class="t b" style="left:402.00px;top:50.60px;font-size:7.50px;color:#f0f0f0;transform:scaleX(0.880);transform-origin:0 50%;">CC Libraries</span>
<span class="t" style="left:449.50px;top:50.60px;font-size:7.50px;color:#c6c6c6;transform:scaleX(0.981);transform-origin:0 50%;">Library</span>
<span class="t" style="left:480.75px;top:50.60px;font-size:7.50px;color:#c6c6c6;transform:scaleX(0.975);transform-origin:0 50%;">Brush Library</span>
<svg style="left:574.2px;top:51px;" width="8" height="5" viewBox="0 0 8 5"><path d="M0 1.500h2.400L1.200 3z" fill="#9a9a9a"/><path d="M3 .5h5M3 2.500h5M3 4.500h5" stroke="#9a9a9a" stroke-width=".9"/></svg>
<div class="dd" style="left:403px;top:62.200px;width:144px;height:10.800px;"></div>
<span class="t b" style="left:409.50px;top:64.80px;font-size:7.50px;color:#efefef;transform:scaleX(0.875);transform-origin:0 50%;">Fun and Games</span>
<svg style="left:539.300px;top:66.300px;" width="5" height="3.200" viewBox="0 0 5 3.200"><path d="M0 0h5L2.500 3.200z" fill="#e4e4e4"/></svg>
<div class="a" style="left:552px;top:62px;width:12.5px;height:11.5px;background:#242325;border-radius:1px;"></div>
<svg style="left:554.700px;top:64.300px;" width="7" height="7" viewBox="0 0 7 7"><g fill="#ececec"><rect x="0" y="0" width="3" height="3"/><rect x="4" y="0" width="3" height="3"/><rect x="0" y="4" width="3" height="3"/><rect x="4" y="4" width="3" height="3"/></g></svg>
<div class="a" style="left:569.5px;top:63.8px;width:6.8px;height:7.4px;background:#8b8a8c;"></div>
<div class="a" style="left:403px;top:76.6px;width:164px;height:15.2px;background:#9c9b9d;border:1px solid #2b2a2c;"></div>
<svg style="left:405.500px;top:81px;" width="7" height="7.500" viewBox="0 0 7 7.500"><circle cx="2.900" cy="2.900" r="2.300" fill="none" stroke="#4c4b4d" stroke-width=".9"/><path d="M4.600 4.800L6.700 7.200" stroke="#4c4b4d" stroke-width="1.100"/></svg>
<span class="t" style="left:415.50px;top:81.20px;font-size:7.50px;color:#7d7c7f;transform:scaleX(0.868);transform-origin:0 50%;">Search Adobe Stock</span>
<div class="a" style="left:567.5px;top:76.6px;width:12.5px;height:15.2px;background:#343335;border:1px solid #2b2a2c;"></div>
<svg style="left:570.800px;top:82.500px;" width="5" height="3.400" viewBox="0 0 5 3.400"><path d="M0 0h5L2.500 3.400z" fill="#f0f0f0"/></svg>
<div class="a" style="left:399px;top:93px;width:186.5px;height:77.5px;background:#383739;"></div>
<div class="a" style="left:399px;top:93px;width:177px;height:77px;overflow:hidden;"><!-- thumbnails: page coords via viewBox; inner drawing in 5.63x zoom units -->
<svg style="left:0;top:0;" width="177" height="77" viewBox="399 93 177 77">
  <defs>
    <linearGradient id="sky" x1="0" y1="0" x2="0" y2="1"><stop offset="0" stop-color="#aab9cb"/><stop offset=".16" stop-color="#cfd3d6"/><stop offset=".25" stop-color="#a99a88"/><stop offset=".32" stop-color="#b39474"/><stop offset="1" stop-color="#c0a384"/></linearGradient>
    <clipPath id="tclip"><rect x="22" y="18" width="360" height="232"/></clipPath>
    
  </defs>
  <g transform="translate(400 92) scale(.17762)">
    <g clip-path="url(#tclip)">
      <rect x="22" y="18" width="360" height="232" fill="url(#sky)"/>
      <path d="M40 30h60l10 12H60zM150 22h70l12 14h-60zM300 25h60l8 12h-50z" fill="#e9e9e9" opacity=".7"/>
      <!-- rear bike (blue-black) -->
      <path d="M236 95c5-30 20-55 45-62l30 2 22 30 18 40-4 40-40 14-56-14z" fill="#2b2e34"/>
      <path d="M262 40l40-8 10 30-40 12z" fill="#1d2836"/>
      <circle cx="322" cy="132" r="42" fill="#1e1d1f"/><circle cx="322" cy="132" r="27" fill="#7d6e5e"/><circle cx="322" cy="132" r="9" fill="#222"/>
      <path d="M225 45l60-10 2 6-60 10z" fill="#2a2a2c"/>
      <!-- front bike -->
      <path d="M36 110c0-30 20-52 58-58l68-6 38 20 28 56-10 50-56 26-108-18z" fill="#403b36"/>
      <path d="M95 62c25-10 60-10 80 5l-10 35-70 5z" fill="#5f5345"/>
      <path d="M60 90l40-8 10 40-45 10z" fill="#2a2826"/>
      <circle cx="80" cy="150" r="42" fill="#222021"/><circle cx="80" cy="150" r="24" fill="#6b6156"/>
      <circle cx="182" cy="168" r="54" fill="#1c1b1c"/><circle cx="182" cy="168" r="36" fill="#85766a"/><circle cx="182" cy="168" r="12" fill="#262424"/>
      <path d="M150 100c15-25 50-30 75-5l-10 12c-18-18-40-15-52 2z" fill="#7b6f60"/>
      <path d="M158 38l12-3 22 125-12 3z" fill="#2c2a28"/>
      <path d="M90 35l110-8 2 7-110 8z" fill="#2a2826"/>
      <circle cx="196" cy="52" r="14" fill="#c9c2b4"/><circle cx="196" cy="52" r="14" fill="none" stroke="#3a3632" stroke-width="5"/>
      <path d="M40 205c40 18 150 30 230 5l60-20 20 10-60 30-200 5z" fill="#8f7a64" opacity=".55"/>
      <rect x="340" y="240" width="38" height="5" fill="#6f6252"/>
    </g>
    <g transform="translate(371 0)"><g clip-path="url(#tclip)">
      <rect x="22" y="18" width="360" height="232" fill="url(#sky)"/>
      <path d="M40 30h60l10 12H60zM150 22h70l12 14h-60zM300 25h60l8 12h-50z" fill="#e9e9e9" opacity=".7"/>
      <!-- rear bike (blue-black) -->
      <path d="M236 95c5-30 20-55 45-62l30 2 22 30 18 40-4 40-40 14-56-14z" fill="#2b2e34"/>
      <path d="M262 40l40-8 10 30-40 12z" fill="#1d2836"/>
      <circle cx="322" cy="132" r="42" fill="#1e1d1f"/><circle cx="322" cy="132" r="27" fill="#7d6e5e"/><circle cx="322" cy="132" r="9" fill="#222"/>
      <path d="M225 45l60-10 2 6-60 10z" fill="#2a2a2c"/>
      <!-- front bike -->
      <path d="M36 110c0-30 20-52 58-58l68-6 38 20 28 56-10 50-56 26-108-18z" fill="#403b36"/>
      <path d="M95 62c25-10 60-10 80 5l-10 35-70 5z" fill="#5f5345"/>
      <path d="M60 90l40-8 10 40-45 10z" fill="#2a2826"/>
      <circle cx="80" cy="150" r="42" fill="#222021"/><circle cx="80" cy="150" r="24" fill="#6b6156"/>
      <circle cx="182" cy="168" r="54" fill="#1c1b1c"/><circle cx="182" cy="168" r="36" fill="#85766a"/><circle cx="182" cy="168" r="12" fill="#262424"/>
      <path d="M150 100c15-25 50-30 75-5l-10 12c-18-18-40-15-52 2z" fill="#7b6f60"/>
      <path d="M158 38l12-3 22 125-12 3z" fill="#2c2a28"/>
      <path d="M90 35l110-8 2 7-110 8z" fill="#2a2826"/>
      <circle cx="196" cy="52" r="14" fill="#c9c2b4"/><circle cx="196" cy="52" r="14" fill="none" stroke="#3a3632" stroke-width="5"/>
      <path d="M40 205c40 18 150 30 230 5l60-20 20 10-60 30-200 5z" fill="#8f7a64" opacity=".55"/>
      <rect x="340" y="240" width="38" height="5" fill="#6f6252"/>
    </g></g>
    <!-- logo thumb -->
    <rect x="24" y="265" width="358" height="190" fill="#f1e9de"/>
    <rect x="24" y="265" width="358" height="32" fill="#e3e1df"/>
    <circle cx="240" cy="358" r="36" fill="none" stroke="#3b3a3d" stroke-width="9"/>
    <path d="M205 350c20-12 50-12 72 2l-5 22c-20-6-45-6-65 2zM212 385c18 10 42 10 56 0l6 30c-22 16-50 16-68 0z" fill="#3b3a3d"/>
    <path d="M150 345l12-18 6 40 18-5 5 30h-36z" fill="#3b3a3d"/>
    <path d="M128 415c18-18 44-24 66-14 12 6 22 14 30 16l-4 26H132z" fill="#e4505e" opacity=".85"/>
    <path d="M140 392c10-10 22-12 30-6M175 380c8-4 18-2 24 6" stroke="#e85564" stroke-width="7" fill="none"/>
    <!-- red car thumb -->
    <rect x="397" y="268" width="354" height="190" fill="#dcdcde"/>
    <path d="M400 445C402 412 420 392 455 380c25-26 65-42 115-42 30 2 45 14 62 32 38 4 78 6 103 14 13 13 17 33 15 61z" fill="#b41a28"/>
    <path d="M472 372c25-18 58-26 96-26 18 3 30 12 42 24z" fill="#94161f"/>
    <path d="M500 366c4-10 12-16 24-17v17zM534 348c20-1 36 2 48 18h-48z" fill="#4b2e38"/>
    <circle cx="482" cy="420" r="21" fill="#f4f4f4"/><circle cx="702" cy="420" r="21" fill="#f4f4f4"/>
    <circle cx="482" cy="420" r="26" fill="none" stroke="#5a1018" stroke-width="7"/><circle cx="702" cy="420" r="26" fill="none" stroke="#5a1018" stroke-width="7"/>
  </g>
</svg>
</div>
<div class="a" style="left:576px;top:93px;width:9.5px;height:77.5px;background:#39383a;border-left:1px solid #2c2b2d;"></div>
<svg style="left:578.300px;top:98.500px;" width="5" height="3.500" viewBox="0 0 5 3.500"><path d="M0 3.500h5L2.500 0z" fill="#e0e0e0"/></svg>
<svg style="left:578.300px;top:164px;" width="5" height="3.500" viewBox="0 0 5 3.500"><path d="M0 0h5L2.500 3.500z" fill="#e0e0e0"/></svg>
<div class="a" style="left:577.3px;top:120px;width:7.4px;height:9px;background:#8e8d8f;border-radius:.5px;"></div>
<div class="a" style="left:399px;top:170.5px;width:186.5px;height:16.5px;background:#414042;border-top:1px solid #2c2b2d;"></div>
<div class="a" style="left:404px;top:174px;width:9.3px;height:9.3px;background:#444345;border:1px solid #6f6e70;"></div>
<svg style="left:554px;top:174.500px;" width="11.500" height="8" viewBox="0 0 11.500 8"><ellipse cx="4.200" cy="4.100" rx="3.500" ry="3" fill="none" stroke="#c9c9c9" stroke-width="1.100"/><ellipse cx="7.400" cy="4" rx="3.500" ry="3.300" fill="none" stroke="#c9c9c9" stroke-width="1.100"/><circle cx="6.200" cy="4.200" r="1.300" fill="none" stroke="#c9c9c9" stroke-width=".8"/></svg>
<svg style="left:570px;top:174px;" width="7.500" height="9" viewBox="0 0 7.500 9"><path d="M0 1.800h7.500M2.500 1.800V.5h2.500v1.300" stroke="#bdbdbd" stroke-width=".9" fill="none"/><path d="M.8 2.800h5.900L6.100 9H1.400z" fill="#a9a9a9"/></svg>
<div class="a" style="left:398px;top:186.5px;width:187.5px;height:10.5px;background:#2d2c2e;"></div>
<div class="a" style="left:398.5px;top:186.5px;width:38px;height:10.5px;background:#444345;"></div>
<div class="a" style="left:437px;top:187px;width:113px;height:10px;background:#373638;"></div>
<div class="a" style="left:461.5px;top:187px;width:1px;height:10px;background:#2d2c2e;"></div>
<div class="a" style="left:483px;top:187px;width:1px;height:10px;background:#2d2c2e;"></div>
<div class="a" style="left:525px;top:187px;width:1px;height:10px;background:#2d2c2e;"></div>
<span class="t b" style="left:401.50px;top:188.70px;font-size:7.50px;color:#f0f0f0;transform:scaleX(0.881);transform-origin:0 50%;">Swatches</span>
<span class="t" style="left:441.50px;top:188.70px;font-size:7.50px;color:#c6c6c6;transform:scaleX(0.959);transform-origin:0 50%;">Align</span>
<span class="t" style="left:466.00px;top:188.70px;font-size:7.50px;color:#c6c6c6;transform:scaleX(1.079);transform-origin:0 50%;">Info</span>
<span class="t" style="left:487.50px;top:188.70px;font-size:7.50px;color:#c6c6c6;">Transform</span>
<span class="t" style="left:529.50px;top:188.70px;font-size:7.50px;color:#c6c6c6;transform:scaleX(0.976);transform-origin:0 50%;">Color</span>
<svg style="left:574.2px;top:189.5px;" width="8" height="5" viewBox="0 0 8 5"><path d="M0 1.500h2.400L1.200 3z" fill="#9a9a9a"/><path d="M3 .5h5M3 2.500h5M3 4.500h5" stroke="#9a9a9a" stroke-width=".9"/></svg>
<div class="a" style="left:400.5px;top:200.5px;width:181px;height:229.5px;background:#444345;border:1px solid #2c2b2d;"></div>
<svg style="left:404px;top:205.500px;" width="5.500" height="4" viewBox="0 0 5.500 4"><path d="M0 0h5.500L2.750 4z" fill="#d4d4d4"/></svg>
<svg style="left:415.5px;top:204px;" width="9.500" height="7" viewBox="0 0 9.500 7"><path d="M.8 .3h3l.8 1h4v1.500H.8z" fill="#c8c8c8"/><path d="M0 3h9.500l-.8 4H.8z" fill="#d4d4d4"/></svg>
<span class="t" style="left:430.00px;top:204.80px;font-size:7.50px;color:#d6d6d6;transform:scaleX(0.942);transform-origin:0 50%;">Default Swatches</span>
<svg style="left:414.5px;top:217.8px;" width="8" height="5.500" viewBox="0 0 8 5.500"><rect x=".4" y=".4" width="7.200" height="4.700" fill="none" stroke="#c4c4c4" stroke-width=".8"/><path d="M.4 2h7.200M.4 3.600h7.200M2.800 .4v4.700M5.200 .4v4.700" stroke="#c4c4c4" stroke-width=".6"/></svg>
<svg style="left:426.3px;top:215.3px;" width="149.26" height="140.48" viewBox="0 0 149.26 140.48"><defs><linearGradient id="lg1"><stop offset="0" stop-color="#fff"/><stop offset="1" stop-color="#000"/></linearGradient><radialGradient id="rg1"><stop offset="0" stop-color="#fff"/><stop offset="1" stop-color="#000"/></radialGradient><radialGradient id="rgr"><stop offset="0" stop-color="#f00"/><stop offset="1" stop-color="#000"/></radialGradient><radialGradient id="rgg"><stop offset="0" stop-color="#0f0"/><stop offset="1" stop-color="#000"/></radialGradient><radialGradient id="rgb"><stop offset="0" stop-color="#00f"/><stop offset="1" stop-color="#000"/></radialGradient><linearGradient id="lg2"><stop offset="0" stop-color="#26f"/><stop offset=".3" stop-color="#fff"/><stop offset=".6" stop-color="#fc3"/><stop offset="1" stop-color="#f80"/></linearGradient><linearGradient id="lg3"><stop offset="0" stop-color="#f00"/><stop offset=".2" stop-color="#ff0"/><stop offset=".4" stop-color="#0f0"/><stop offset=".6" stop-color="#0ff"/><stop offset=".8" stop-color="#00f"/><stop offset="1" stop-color="#f0f"/></linearGradient></defs><rect x="0" y="0" width="149.26" height="131.70" fill="#1a191b"/><rect x="0" y="131.70" width="52.68" height="8.78" fill="#1a191b"/><rect x="0.00" y="0.00" width="8.78" height="8.78" fill="#000"/><rect x="8.78" y="0.00" width="8.78" height="8.78" fill="#000"/><rect x="17.56" y="0.00" width="8.78" height="8.78" fill="#000"/><rect x="26.34" y="0.00" width="8.78" height="8.78" fill="#000"/><rect x="35.62" y="0.50" width="7.78" height="7.78" fill="#103b07"/><rect x="44.40" y="0.50" width="7.78" height="7.78" fill="#276f17"/><rect x="53.18" y="0.50" width="7.78" height="7.78" fill="#3da026"/><rect x="61.96" y="0.50" width="7.78" height="7.78" fill="#51cf36"/><rect x="70.74" y="0.50" width="7.78" height="7.78" fill="#66fd44"/><rect x="79.52" y="0.50" width="7.78" height="7.78" fill="#390302"/><rect x="88.30" y="0.50" width="7.78" height="7.78" fill="#3c3c09"/><rect x="97.08" y="0.50" width="7.78" height="7.78" fill="#446f18"/><rect x="105.86" y="0.50" width="7.78" height="7.78" fill="#51a027"/><rect x="114.64" y="0.50" width="7.78" height="7.78" fill="#60cf36"/><rect x="123.42" y="0.50" width="7.78" height="7.78" fill="#71fd44"/><rect x="132.20" y="0.50" width="7.78" height="7.78" fill="#6b0c07"/><rect x="140.98" y="0.50" width="7.78" height="7.78" fill="#6c3e0d"/><rect x="0.50" y="9.28" width="7.78" height="7.78" fill="#70701a"/><rect x="9.28" y="9.28" width="7.78" height="7.78" fill="#77a028"/><rect x="18.06" y="9.28" width="7.78" height="7.78" fill="#80cf37"/><rect x="26.84" y="9.28" width="7.78" height="7.78" fill="#8cfd45"/><rect x="35.12" y="8.78" width="8.78" height="8.78" fill="#000"/><rect x="44.40" y="9.28" width="7.78" height="7.78" fill="#3c3c3c"/><rect x="52.68" y="8.78" width="8.78" height="8.78" fill="#000"/><rect x="61.96" y="9.28" width="7.78" height="7.78" fill="#00003a"/><rect x="70.74" y="9.28" width="7.78" height="7.78" fill="#103b3c"/><rect x="79.52" y="9.28" width="7.78" height="7.78" fill="#276f3f"/><rect x="88.30" y="9.28" width="7.78" height="7.78" fill="#3da045"/><rect x="97.08" y="9.28" width="7.78" height="7.78" fill="#51cf4d"/><rect x="105.86" y="9.28" width="7.78" height="7.78" fill="#66fd57"/><rect x="114.64" y="9.28" width="7.78" height="7.78" fill="#39033b"/><rect x="123.42" y="9.28" width="7.78" height="7.78" fill="#3c3c3c"/><rect x="132.20" y="9.28" width="7.78" height="7.78" fill="#446f40"/><rect x="140.98" y="9.28" width="7.78" height="7.78" fill="#51a046"/><rect x="0.50" y="18.06" width="7.78" height="7.78" fill="#60cf4e"/><rect x="9.28" y="18.06" width="7.78" height="7.78" fill="#71fd57"/><rect x="18.06" y="18.06" width="7.78" height="7.78" fill="#6b0c3c"/><rect x="26.84" y="18.06" width="7.78" height="7.78" fill="#6c3e3d"/><rect x="35.62" y="18.06" width="7.78" height="7.78" fill="#707040"/><rect x="44.40" y="18.06" width="7.78" height="7.78" fill="#77a046"/><rect x="53.18" y="18.06" width="7.78" height="7.78" fill="#80cf4e"/><rect x="61.96" y="18.06" width="7.78" height="7.78" fill="#8cfd58"/><rect x="70.24" y="17.56" width="8.78" height="8.78" fill="#000"/><rect x="79.52" y="18.06" width="7.78" height="7.78" fill="#707070"/><rect x="87.80" y="17.56" width="8.78" height="8.78" fill="#000"/><rect x="97.08" y="18.06" width="7.78" height="7.78" fill="#00006d"/><rect x="105.86" y="18.06" width="7.78" height="7.78" fill="#103b6e"/><rect x="114.64" y="18.06" width="7.78" height="7.78" fill="#276f6f"/><rect x="123.42" y="18.06" width="7.78" height="7.78" fill="#3da072"/><rect x="132.20" y="18.06" width="7.78" height="7.78" fill="#51cf76"/><rect x="140.98" y="18.06" width="7.78" height="7.78" fill="#66fd7c"/><rect x="0.50" y="26.84" width="7.78" height="7.78" fill="#39036d"/><rect x="9.28" y="26.84" width="7.78" height="7.78" fill="#3c3c6e"/><rect x="18.06" y="26.84" width="7.78" height="7.78" fill="#446f6f"/><rect x="26.84" y="26.84" width="7.78" height="7.78" fill="#51a072"/><rect x="35.62" y="26.84" width="7.78" height="7.78" fill="#60cf76"/><rect x="44.40" y="26.84" width="7.78" height="7.78" fill="#71fd7c"/><rect x="53.18" y="26.84" width="7.78" height="7.78" fill="#6b0c6e"/><rect x="61.96" y="26.84" width="7.78" height="7.78" fill="#6c3e6e"/><rect x="70.74" y="26.84" width="7.78" height="7.78" fill="#707070"/><rect x="79.52" y="26.84" width="7.78" height="7.78" fill="#77a073"/><rect x="88.30" y="26.84" width="7.78" height="7.78" fill="#80cf77"/><rect x="97.08" y="26.84" width="7.78" height="7.78" fill="#8cfd7c"/><rect x="105.36" y="26.34" width="8.78" height="8.78" fill="#000"/><rect x="114.64" y="26.84" width="7.78" height="7.78" fill="#a1a1a1"/><rect x="122.92" y="26.34" width="8.78" height="8.78" fill="#000"/><rect x="132.20" y="26.84" width="7.78" height="7.78" fill="#00009d"/><rect x="140.98" y="26.84" width="7.78" height="7.78" fill="#103b9e"/><rect x="0.50" y="35.62" width="7.78" height="7.78" fill="#276f9f"/><rect x="9.28" y="35.62" width="7.78" height="7.78" fill="#3da0a0"/><rect x="18.06" y="35.62" width="7.78" height="7.78" fill="#51cfa3"/><rect x="26.84" y="35.62" width="7.78" height="7.78" fill="#66fda6"/><rect x="35.62" y="35.62" width="7.78" height="7.78" fill="#39039e"/><rect x="44.40" y="35.62" width="7.78" height="7.78" fill="#3c3c9e"/><rect x="53.18" y="35.62" width="7.78" height="7.78" fill="#446f9f"/><rect x="61.96" y="35.62" width="7.78" height="7.78" fill="#51a0a0"/><rect x="70.74" y="35.62" width="7.78" height="7.78" fill="#60cfa3"/><rect x="79.52" y="35.62" width="7.78" height="7.78" fill="#71fda6"/><rect x="88.30" y="35.62" width="7.78" height="7.78" fill="#6b0c9e"/><rect x="97.08" y="35.62" width="7.78" height="7.78" fill="#6c3e9e"/><rect x="105.86" y="35.62" width="7.78" height="7.78" fill="#70709f"/><rect x="114.64" y="35.62" width="7.78" height="7.78" fill="#77a0a1"/><rect x="123.42" y="35.62" width="7.78" height="7.78" fill="#80cfa3"/><rect x="132.20" y="35.62" width="7.78" height="7.78" fill="#8cfda7"/><rect x="140.48" y="35.12" width="8.78" height="8.78" fill="#000"/><rect x="0.50" y="44.40" width="7.78" height="7.78" fill="#d1d1d1"/><rect x="8.78" y="43.90" width="8.78" height="8.78" fill="#000"/><rect x="18.06" y="44.40" width="7.78" height="7.78" fill="#0000cc"/><rect x="26.84" y="44.40" width="7.78" height="7.78" fill="#103bcc"/><rect x="35.62" y="44.40" width="7.78" height="7.78" fill="#276fcd"/><rect x="44.40" y="44.40" width="7.78" height="7.78" fill="#3da0ce"/><rect x="53.18" y="44.40" width="7.78" height="7.78" fill="#51cfd0"/><rect x="61.96" y="44.40" width="7.78" height="7.78" fill="#66fdd2"/><rect x="70.74" y="44.40" width="7.78" height="7.78" fill="#3903cc"/><rect x="79.52" y="44.40" width="7.78" height="7.78" fill="#3c3ccc"/><rect x="88.30" y="44.40" width="7.78" height="7.78" fill="#446fcd"/><rect x="97.08" y="44.40" width="7.78" height="7.78" fill="#51a0ce"/><rect x="105.86" y="44.40" width="7.78" height="7.78" fill="#60cfd0"/><rect x="114.64" y="44.40" width="7.78" height="7.78" fill="#71fdd2"/><rect x="123.42" y="44.40" width="7.78" height="7.78" fill="#6b0ccc"/><rect x="132.20" y="44.40" width="7.78" height="7.78" fill="#6c3ecc"/><rect x="140.98" y="44.40" width="7.78" height="7.78" fill="#7070cd"/><rect x="0.50" y="53.18" width="7.78" height="7.78" fill="#77a0ce"/><rect x="9.28" y="53.18" width="7.78" height="7.78" fill="#80cfd0"/><rect x="18.06" y="53.18" width="7.78" height="7.78" fill="#8cfdd2"/><rect x="26.34" y="52.68" width="8.78" height="8.78" fill="#000"/><rect x="35.62" y="53.18" width="7.78" height="7.78" fill="#ffffff"/><rect x="43.90" y="52.68" width="8.78" height="8.78" fill="#000"/><rect x="53.18" y="53.18" width="7.78" height="7.78" fill="#0000fa"/><rect x="61.96" y="53.18" width="7.78" height="7.78" fill="#103bfa"/><rect x="70.74" y="53.18" width="7.78" height="7.78" fill="#276ffa"/><rect x="79.52" y="53.18" width="7.78" height="7.78" fill="#3da0fb"/><rect x="88.30" y="53.18" width="7.78" height="7.78" fill="#51cffc"/><rect x="97.08" y="53.18" width="7.78" height="7.78" fill="#66fdfe"/><rect x="105.86" y="53.18" width="7.78" height="7.78" fill="#3903fa"/><rect x="114.64" y="53.18" width="7.78" height="7.78" fill="#3c3cfa"/><rect x="123.42" y="53.18" width="7.78" height="7.78" fill="#446ffa"/><rect x="132.20" y="53.18" width="7.78" height="7.78" fill="#51a0fb"/><rect x="140.98" y="53.18" width="7.78" height="7.78" fill="#60cffc"/><rect x="0.50" y="61.96" width="7.78" height="7.78" fill="#71fdfe"/><rect x="9.28" y="61.96" width="7.78" height="7.78" fill="#6b0cfa"/><rect x="18.06" y="61.96" width="7.78" height="7.78" fill="#6c3efa"/><rect x="26.84" y="61.96" width="7.78" height="7.78" fill="#7070fa"/><rect x="35.62" y="61.96" width="7.78" height="7.78" fill="#77a0fb"/><rect x="44.40" y="61.96" width="7.78" height="7.78" fill="#80cffc"/><rect x="53.18" y="61.96" width="7.78" height="7.78" fill="#8cfdfe"/><rect x="61.46" y="61.46" width="8.78" height="8.78" fill="#000"/><rect x="70.74" y="61.96" width="7.78" height="7.78" fill="#f42f21"/><rect x="79.02" y="61.46" width="8.78" height="8.78" fill="#000"/><rect x="88.30" y="61.96" width="7.78" height="7.78" fill="#9a180f"/><rect x="97.08" y="61.96" width="7.78" height="7.78" fill="#9b4114"/><rect x="105.86" y="61.96" width="7.78" height="7.78" fill="#9d711e"/><rect x="114.64" y="61.96" width="7.78" height="7.78" fill="#a1a12b"/><rect x="123.42" y="61.96" width="7.78" height="7.78" fill="#a7d039"/><rect x="132.20" y="61.96" width="7.78" height="7.78" fill="#affe46"/><rect x="140.98" y="61.96" width="7.78" height="7.78" fill="#c72418"/><rect x="0.50" y="70.74" width="7.78" height="7.78" fill="#c8451b"/><rect x="9.28" y="70.74" width="7.78" height="7.78" fill="#c97324"/><rect x="18.06" y="70.74" width="7.78" height="7.78" fill="#cca22f"/><rect x="26.84" y="70.74" width="7.78" height="7.78" fill="#d1d13b"/><rect x="35.62" y="70.74" width="7.78" height="7.78" fill="#d6fe48"/><rect x="44.40" y="70.74" width="7.78" height="7.78" fill="#f42f21"/><rect x="53.18" y="70.74" width="7.78" height="7.78" fill="#f44a23"/><rect x="61.96" y="70.74" width="7.78" height="7.78" fill="#f5762a"/><rect x="70.74" y="70.74" width="7.78" height="7.78" fill="#f8a433"/><rect x="79.52" y="70.74" width="7.78" height="7.78" fill="#fbd23f"/><rect x="88.30" y="70.74" width="7.78" height="7.78" fill="#ffff4b"/><rect x="96.58" y="70.24" width="8.78" height="8.78" fill="#000"/><rect x="105.86" y="70.74" width="7.78" height="7.78" fill="#66fd44"/><rect x="114.14" y="70.24" width="8.78" height="8.78" fill="#000"/><rect x="123.42" y="70.74" width="7.78" height="7.78" fill="#9a183d"/><rect x="132.20" y="70.74" width="7.78" height="7.78" fill="#9b413e"/><rect x="140.98" y="70.74" width="7.78" height="7.78" fill="#9d7142"/><rect x="0.50" y="79.52" width="7.78" height="7.78" fill="#a1a148"/><rect x="9.28" y="79.52" width="7.78" height="7.78" fill="#a7d04f"/><rect x="18.06" y="79.52" width="7.78" height="7.78" fill="#affe59"/><rect x="26.84" y="79.52" width="7.78" height="7.78" fill="#c72440"/><rect x="35.62" y="79.52" width="7.78" height="7.78" fill="#c84541"/><rect x="44.40" y="79.52" width="7.78" height="7.78" fill="#c97344"/><rect x="53.18" y="79.52" width="7.78" height="7.78" fill="#cca24a"/><rect x="61.96" y="79.52" width="7.78" height="7.78" fill="#d1d151"/><rect x="70.74" y="79.52" width="7.78" height="7.78" fill="#d6fe5a"/><rect x="79.52" y="79.52" width="7.78" height="7.78" fill="#f42f43"/><rect x="88.30" y="79.52" width="7.78" height="7.78" fill="#f44a44"/><rect x="97.08" y="79.52" width="7.78" height="7.78" fill="#f57647"/><rect x="105.86" y="79.52" width="7.78" height="7.78" fill="#f8a44c"/><rect x="114.64" y="79.52" width="7.78" height="7.78" fill="#fbd253"/><rect x="123.42" y="79.52" width="7.78" height="7.78" fill="#ffff5c"/><rect x="131.70" y="79.02" width="8.78" height="8.78" fill="#000"/><rect x="140.98" y="79.52" width="7.78" height="7.78" fill="#0000fa"/><rect x="0.00" y="87.80" width="8.78" height="8.78" fill="#000"/><rect x="9.28" y="88.30" width="7.78" height="7.78" fill="#9a186e"/><rect x="18.06" y="88.30" width="7.78" height="7.78" fill="#9b416f"/><rect x="26.84" y="88.30" width="7.78" height="7.78" fill="#9d7170"/><rect x="35.62" y="88.30" width="7.78" height="7.78" fill="#a1a173"/><rect x="44.40" y="88.30" width="7.78" height="7.78" fill="#a7d077"/><rect x="53.18" y="88.30" width="7.78" height="7.78" fill="#affe7d"/><rect x="61.96" y="88.30" width="7.78" height="7.78" fill="#c7246f"/><rect x="70.74" y="88.30" width="7.78" height="7.78" fill="#c84570"/><rect x="79.52" y="88.30" width="7.78" height="7.78" fill="#c97372"/><rect x="88.30" y="88.30" width="7.78" height="7.78" fill="#cca274"/><rect x="97.08" y="88.30" width="7.78" height="7.78" fill="#d1d178"/><rect x="105.86" y="88.30" width="7.78" height="7.78" fill="#d6fe7e"/><rect x="114.64" y="88.30" width="7.78" height="7.78" fill="#f42f71"/><rect x="123.42" y="88.30" width="7.78" height="7.78" fill="#f44a71"/><rect x="132.20" y="88.30" width="7.78" height="7.78" fill="#f57673"/><rect x="140.98" y="88.30" width="7.78" height="7.78" fill="#f8a476"/><rect x="0.50" y="97.08" width="7.78" height="7.78" fill="#fbd27a"/><rect x="9.28" y="97.08" width="7.78" height="7.78" fill="#ffff7f"/><rect x="17.56" y="96.58" width="8.78" height="8.78" fill="#000"/><rect x="26.84" y="97.08" width="7.78" height="7.78" fill="#ffff4b"/><rect x="35.12" y="96.58" width="8.78" height="8.78" fill="#000"/><rect x="44.40" y="97.08" width="7.78" height="7.78" fill="#9a189e"/><rect x="53.18" y="97.08" width="7.78" height="7.78" fill="#9b419e"/><rect x="61.96" y="97.08" width="7.78" height="7.78" fill="#9d719f"/><rect x="70.74" y="97.08" width="7.78" height="7.78" fill="#a1a1a1"/><rect x="79.52" y="97.08" width="7.78" height="7.78" fill="#a7d0a4"/><rect x="88.30" y="97.08" width="7.78" height="7.78" fill="#affea7"/><rect x="97.08" y="97.08" width="7.78" height="7.78" fill="#c7249f"/><rect x="105.86" y="97.08" width="7.78" height="7.78" fill="#c8459f"/><rect x="114.64" y="97.08" width="7.78" height="7.78" fill="#c973a0"/><rect x="123.42" y="97.08" width="7.78" height="7.78" fill="#cca2a2"/><rect x="132.20" y="97.08" width="7.78" height="7.78" fill="#d1d1a4"/><rect x="140.98" y="97.08" width="7.78" height="7.78" fill="#d6fea8"/><rect x="0.50" y="105.86" width="7.78" height="7.78" fill="#f42fa0"/><rect x="9.28" y="105.86" width="7.78" height="7.78" fill="#f44aa0"/><rect x="18.06" y="105.86" width="7.78" height="7.78" fill="#f576a1"/><rect x="26.84" y="105.86" width="7.78" height="7.78" fill="#f8a4a2"/><rect x="35.62" y="105.86" width="7.78" height="7.78" fill="#fbd2a5"/><rect x="44.40" y="105.86" width="7.78" height="7.78" fill="#ffffa8"/><rect x="52.68" y="105.36" width="8.78" height="8.78" fill="#000"/><rect x="61.96" y="105.86" width="7.78" height="7.78" fill="#66fdfe"/><rect x="70.24" y="105.36" width="8.78" height="8.78" fill="#000"/><rect x="79.52" y="105.86" width="7.78" height="7.78" fill="#9a18cd"/><rect x="88.30" y="105.86" width="7.78" height="7.78" fill="#9b41cd"/><rect x="97.08" y="105.86" width="7.78" height="7.78" fill="#9d71cd"/><rect x="105.86" y="105.86" width="7.78" height="7.78" fill="#a1a1ce"/><rect x="114.64" y="105.86" width="7.78" height="7.78" fill="#a7d0d0"/><rect x="123.42" y="105.86" width="7.78" height="7.78" fill="#affed3"/><rect x="132.20" y="105.86" width="7.78" height="7.78" fill="#c724cd"/><rect x="140.98" y="105.86" width="7.78" height="7.78" fill="#c845cd"/><rect x="0.50" y="114.64" width="7.78" height="7.78" fill="#c973ce"/><rect x="9.28" y="114.64" width="7.78" height="7.78" fill="#cca2cf"/><rect x="18.06" y="114.64" width="7.78" height="7.78" fill="#d1d1d1"/><rect x="26.84" y="114.64" width="7.78" height="7.78" fill="#d6fed3"/><rect x="35.62" y="114.64" width="7.78" height="7.78" fill="#f42fce"/><rect x="44.40" y="114.64" width="7.78" height="7.78" fill="#f44ace"/><rect x="53.18" y="114.64" width="7.78" height="7.78" fill="#f576ce"/><rect x="61.96" y="114.64" width="7.78" height="7.78" fill="#f8a4cf"/><rect x="70.74" y="114.64" width="7.78" height="7.78" fill="#fbd2d1"/><rect x="79.52" y="114.64" width="7.78" height="7.78" fill="#ffffd4"/><rect x="87.80" y="114.14" width="8.78" height="8.78" fill="#000"/><rect x="97.08" y="114.64" width="7.78" height="7.78" fill="#f42ffb"/><rect x="105.36" y="114.14" width="8.78" height="8.78" fill="#000"/><rect x="114.64" y="114.64" width="7.78" height="7.78" fill="#9a18fa"/><rect x="123.42" y="114.64" width="7.78" height="7.78" fill="#9b41fa"/><rect x="132.20" y="114.64" width="7.78" height="7.78" fill="#9d71fa"/><rect x="140.98" y="114.64" width="7.78" height="7.78" fill="#a1a1fb"/><rect x="0.50" y="123.42" width="7.78" height="7.78" fill="#a7d0fd"/><rect x="9.28" y="123.42" width="7.78" height="7.78" fill="#affefe"/><rect x="18.06" y="123.42" width="7.78" height="7.78" fill="#c724fa"/><rect x="26.84" y="123.42" width="7.78" height="7.78" fill="#c845fa"/><rect x="35.62" y="123.42" width="7.78" height="7.78" fill="#c973fb"/><rect x="44.40" y="123.42" width="7.78" height="7.78" fill="#cca2fc"/><rect x="53.18" y="123.42" width="7.78" height="7.78" fill="#d1d1fd"/><rect x="61.96" y="123.42" width="7.78" height="7.78" fill="#d6feff"/><rect x="70.74" y="123.42" width="7.78" height="7.78" fill="#f42ffb"/><rect x="79.52" y="123.42" width="7.78" height="7.78" fill="#f44afb"/><rect x="88.30" y="123.42" width="7.78" height="7.78" fill="#f576fb"/><rect x="97.08" y="123.42" width="7.78" height="7.78" fill="#f8a4fc"/><rect x="105.86" y="123.42" width="7.78" height="7.78" fill="#fbd2fd"/><rect x="114.64" y="123.42" width="7.78" height="7.78" fill="#ffffff"/><rect x="123.42" y="123.42" width="7.78" height="7.78" fill="#1f4a4a"/><rect x="132.20" y="123.42" width="7.78" height="7.78" fill="url(#lg1)"/><rect x="140.98" y="123.42" width="7.78" height="7.78" fill="url(#rg1)"/><rect x="0.50" y="132.20" width="7.78" height="7.78" fill="url(#rgr)"/><rect x="9.28" y="132.20" width="7.78" height="7.78" fill="url(#rgg)"/><rect x="18.06" y="132.20" width="7.78" height="7.78" fill="url(#rgb)"/><rect x="26.84" y="132.20" width="7.78" height="7.78" fill="url(#lg2)"/><rect x="35.62" y="132.20" width="7.78" height="7.78" fill="url(#lg3)"/><rect x="44.40" y="132.20" width="7.78" height="7.78" fill="#f2ece0"/></svg>
<div class="a" style="left:401.5px;top:358.5px;width:179px;height:1px;background:#2c2b2d;"></div>
<svg style="left:404px;top:365px;" width="5.500" height="4" viewBox="0 0 5.500 4"><path d="M0 0h5.500L2.750 4z" fill="#d4d4d4"/></svg>
<svg style="left:415.5px;top:364px;" width="9.500" height="7" viewBox="0 0 9.500 7"><path d="M.8 .3h3l.8 1h4v1.500H.8z" fill="#c8c8c8"/><path d="M0 3h9.500l-.8 4H.8z" fill="#d4d4d4"/></svg>
<span class="t" style="left:430.00px;top:364.10px;font-size:7.50px;color:#d6d6d6;transform:scaleX(0.946);transform-origin:0 50%;">Tagged Swatches</span>
<svg style="left:414px;top:377px;" width="8" height="5.500" viewBox="0 0 8 5.500"><rect x=".4" y=".4" width="7.200" height="4.700" fill="none" stroke="#c4c4c4" stroke-width=".8"/><path d="M.4 2h7.200M.4 3.600h7.200M2.800 .4v4.700M5.200 .4v4.700" stroke="#c4c4c4" stroke-width=".6"/></svg>
<svg style="left:427px;top:374.300px;" width="62" height="9" viewBox="0 0 62 9"><defs><radialGradient id="rg9" cx=".4" cy=".4"><stop offset="0" stop-color="#e8e8e8"/><stop offset="1" stop-color="#555"/></radialGradient></defs><rect x="0.40" y=".4" width="8" height="8.200" fill="#6b635d"/><path d="M8.40 3.600V8.600H3.40z" fill="#f4f4f4"/><rect x="9.20" y=".4" width="8" height="8.200" fill="#b39a4e"/><path d="M17.20 3.600V8.600H12.20z" fill="#f4f4f4"/><rect x="18.00" y=".4" width="8" height="8.200" fill="#c8202c"/><path d="M26.00 3.600V8.600H21.00z" fill="#f4f4f4"/><rect x="26.80" y=".4" width="8" height="8.200" fill="#4a6a86"/><path d="M34.80 3.600V8.600H29.80z" fill="#f4f4f4"/><rect x="35.60" y=".4" width="8" height="8.200" fill="#efe6d4"/><path d="M43.60 3.600V8.600H38.60z" fill="#f4f4f4"/><rect x="44.40" y=".4" width="8" height="8.200" fill="url(#rg9)"/><path d="M52.40 3.600V8.600H47.40z" fill="#f4f4f4"/><rect x="53.20" y=".4" width="8" height="8.200" fill="#e3cf45"/><path d="M61.20 3.600V8.600H56.20z" fill="#f4f4f4"/></svg>
<div class="a" style="left:401.5px;top:386px;width:179px;height:1px;background:#2c2b2d;"></div>
<svg style="left:502.500px;top:376px;" width="8" height="12.500" viewBox="0 0 8 12.500"><path d="M.5 .5v9.800l2.300-2.100 1.700 3.800 1.600-.7-1.700-3.700h3.100z" fill="#111" stroke="#f4f4f4" stroke-width=".8"/></svg>
<svg style="left:496px;top:436.500px;" width="8" height="7.500" viewBox="0 0 8 7.500"><path d="M.5 .5h7v4.500L5 7H.5z" fill="none" stroke="#c4c4c4" stroke-width="1"/><path d="M7.500 5L5 7V5z" fill="#c4c4c4"/></svg>
<svg style="left:514.500px;top:437px;" width="8.500" height="7" viewBox="0 0 8.500 7"><path d="M0 .5h3.300l.8 1.100h4.400V7H0z" fill="#c4c4c4"/></svg>
<svg style="left:533px;top:436.800px;" width="9" height="7" viewBox="0 0 9 7"><rect x=".4" y=".4" width="8.200" height="6.200" fill="none" stroke="#c4c4c4" stroke-width=".8"/><path d="M.4 2.500h8.200M.4 4.600h8.200M4.500 .4v6.200" stroke="#c4c4c4" stroke-width=".7"/><rect x=".8" y=".8" width="3.500" height="1.600" fill="#c4c4c4"/><rect x="4.800" y="2.800" width="3.600" height="1.600" fill="#c4c4c4"/></svg>
<svg style="left:552px;top:436.500px;" width="8" height="8" viewBox="0 0 8 8"><path d="M0 0h8v5H6v3H3V5H0z" fill="#c4c4c4"/><path d="M3.600 5.500h1.900v2H3.600z" fill="#555"/></svg>
<svg style="left:571px;top:436px;" width="7.500" height="8.500" viewBox="0 0 7.500 8.500"><path d="M0 1.700h7.500M2.500 1.700V.5h2.500v1.200" stroke="#c4c4c4" stroke-width=".9" fill="none"/><path d="M.8 2.700h5.900L6.100 8.500H1.400z" fill="#a9a9a9"/></svg>
<div class="a" style="left:585px;top:47px;width:1.5px;height:403px;background:#2a292b;"></div>
<div class="a" style="left:586.5px;top:47px;width:188.5px;height:403px;background:#444345;"></div>
<div class="a" style="left:586.5px;top:47px;width:188.5px;height:12px;background:#2d2c2e;"></div>
<div class="a" style="left:586.5px;top:48.2px;width:40.5px;height:10.8px;background:#444345;"></div>
<span class="t b" style="left:591.00px;top:50.60px;font-size:7.50px;color:#f0f0f0;transform:scaleX(0.849);transform-origin:0 50%;">Properties</span>
<svg style="left:764px;top:51px;" width="8" height="5" viewBox="0 0 8 5"><path d="M0 1.500h2.400L1.200 3z" fill="#9a9a9a"/><path d="M3 .5h5M3 2.500h5M3 4.500h5" stroke="#9a9a9a" stroke-width=".9"/></svg>
<div class="a" style="left:604.7px;top:73.8px;width:10.4px;height:10px;background:#a2a1a3;border:1px solid #cfcfcf;border-radius:1px;"></div>
<span class="t b" style="left:607.00px;top:76.71px;font-size:4.80px;color:#efefef;transform:scaleX(0.906);transform-origin:0 50%;">An</span>
<span class="t" style="left:632.50px;top:66.80px;font-size:7.50px;color:#cfcfcf;transform:scaleX(0.987);transform-origin:0 50%;">Document</span>
<span class="t" style="left:632.50px;top:84.80px;font-size:7.50px;color:#cfcfcf;transform:scaleX(0.968);transform-origin:0 50%;">Begin.fla</span>
<div class="hdr" style="left:586.500px;top:99px;width:188.500px;height:11.500px;"></div>
<svg style="left:590.5px;top:103.5px;" width="5.500" height="3.500" viewBox="0 0 5.500 3.500"><path d="M0 0h5.500L2.750 3.500z" fill="#dcdcdc"/></svg>
<span class="t" style="left:599.50px;top:101.80px;font-size:7.50px;color:#e2e2e2;transform:scaleX(0.955);transform-origin:0 50%;">Publish</span>
<span class="t" style="left:605.66px;top:118.80px;font-size:7.50px;color:#cfcfcf;transform:scaleX(0.985);transform-origin:100% 50%;">Profile:</span>
<span class="t" style="left:633.00px;top:118.80px;font-size:7.50px;color:#cfcfcf;transform:scaleX(0.968);transform-origin:0 50%;">Default</span>
<div class="btn" style="left:633px;top:128px;width:74.500px;height:11px;"></div>
<span class="t" style="left:637.00px;top:130.40px;font-size:7.50px;color:#e4e4e4;">Publish Settings...</span>
<div class="ln" style="left:586.500px;top:143px;width:188.500px;"></div>
<span class="t" style="left:606.07px;top:149.80px;font-size:7.50px;color:#cfcfcf;transform:scaleX(1.025);transform-origin:100% 50%;">Target:</span>
<div class="dd" style="left:633px;top:147.500px;width:116px;height:10.500px;"></div>
<span class="t" style="left:637.00px;top:149.80px;font-size:7.50px;color:#e0e0e0;transform:scaleX(0.960);transform-origin:0 50%;">Flash Player 20</span>
<div class="a" style="left:737.5px;top:149px;width:1px;height:7.5px;background:#353436;"></div>
<svg style="left:740.5px;top:151.5px;" width="5.500" height="3.500" viewBox="0 0 5.500 3.500"><path d="M0 0h5.500L2.750 3.500z" fill="#dcdcdc"/></svg>
<span class="t" style="left:607.74px;top:167.80px;font-size:7.50px;color:#cfcfcf;transform:scaleX(0.988);transform-origin:100% 50%;">Script:</span>
<div class="dd" style="left:633px;top:165.500px;width:116px;height:10.500px;"></div>
<span class="t" style="left:637.00px;top:167.80px;font-size:7.50px;color:#e0e0e0;transform:scaleX(1.028);transform-origin:0 50%;">ActionScript 3.0</span>
<div class="a" style="left:737.5px;top:167px;width:1px;height:7.5px;background:#353436;"></div>
<svg style="left:740.5px;top:169.5px;" width="5.500" height="3.500" viewBox="0 0 5.500 3.500"><path d="M0 0h5.500L2.750 3.500z" fill="#dcdcdc"/></svg>
<svg style="left:755px;top:166.500px;" width="8.500" height="9" viewBox="0 0 8.500 9"><path d="M3.200 3.200L7.800 7.800" stroke="#d4d4d4" stroke-width="1.900" stroke-linecap="round"/><circle cx="2.700" cy="2.700" r="2.500" fill="#d4d4d4"/><path d="M2.900 2.900L-.5 1.300 1.300 -.5z" fill="#444345"/></svg>
<div class="ln" style="left:586.500px;top:181px;width:188.500px;"></div>
<span class="t" style="left:608.16px;top:189.30px;font-size:7.50px;color:#cfcfcf;transform:scaleX(0.936);transform-origin:100% 50%;">Class:</span>
<div class="a" style="left:633px;top:188px;width:116px;height:10px;background:#9c9b9d;border:1px solid #2b2a2c;"></div>
<svg style="left:756px;top:188.500px;" width="7.500" height="8.500" viewBox="0 0 7.500 8.500"><path d="M5.600 0L7.500 1.900 2.400 7.400 0 8.500l.8-2.700z" fill="#cfcfcf"/><path d="M4.700 1l1.800 1.800" stroke="#555" stroke-width=".6"/></svg>
<div class="hdr" style="left:586.500px;top:205.500px;width:188.500px;height:11.500px;"></div>
<svg style="left:590.5px;top:209.8px;" width="5.500" height="3.500" viewBox="0 0 5.500 3.500"><path d="M0 0h5.500L2.750 3.500z" fill="#dcdcdc"/></svg>
<span class="t" style="left:599.50px;top:208.10px;font-size:7.50px;color:#e2e2e2;transform:scaleX(0.965);transform-origin:0 50%;">Properties</span>
<span class="t" style="left:612.33px;top:224.80px;font-size:7.50px;color:#cfcfcf;transform:scaleX(0.800);transform-origin:100% 50%;">FPS:</span>
<span class="t" style="left:636.00px;top:224.80px;font-size:7.50px;color:#dba233;transform:scaleX(1.012);transform-origin:0 50%;border-bottom:1px dotted #9a7424;padding-bottom:.5px;">24.00</span>
<div class="ln" style="left:586.500px;top:236px;width:188.500px;"></div>
<span class="t" style="left:612.33px;top:242.80px;font-size:7.50px;color:#cfcfcf;transform:scaleX(0.960);transform-origin:100% 50%;">Size:</span>
<span class="t" style="left:633.97px;top:242.80px;font-size:7.50px;color:#cfcfcf;transform:scaleX(0.886);transform-origin:100% 50%;">W:</span>
<span class="t" style="left:650.00px;top:242.80px;font-size:7.50px;color:#dba233;transform:scaleX(1.019);transform-origin:0 50%;border-bottom:1px dotted #9a7424;padding-bottom:.5px;">1280</span>
<svg style="left:681px;top:242.500px;" width="8.500" height="7" viewBox="0 0 8.500 7"><path d="M3.200 1H2.200a1.700 1.700 0 0 0-1.700 1.700v1.600A1.700 1.700 0 0 0 2.200 6h1M5.300 1h1a1.700 1.700 0 0 1 1.700 1.700v1.600A1.700 1.700 0 0 1 6.300 6h-1" fill="none" stroke="#c8c8c8" stroke-width="1" stroke-dasharray="1.400 .7"/></svg>
<span class="t" style="left:700.50px;top:242.80px;font-size:7.50px;color:#cfcfcf;">H:</span>
<span class="t" style="left:715.50px;top:242.80px;font-size:7.50px;color:#dba233;transform:scaleX(1.079);transform-origin:0 50%;border-bottom:1px dotted #9a7424;padding-bottom:.5px;">720</span>
<span class="t" style="left:751.00px;top:243.30px;font-size:7.50px;color:#cfcfcf;transform:scaleX(1.010);transform-origin:0 50%;">px</span>
<div class="a" style="left:635.5px;top:259.5px;width:6.8px;height:6.8px;background:#39383a;border:1px solid #6b6a6c;"></div>
<span class="t" style="left:645.00px;top:259.80px;font-size:7.50px;color:#dcdcdc;transform:scaleX(0.955);transform-origin:0 50%;">Scale Content</span>
<div class="btn" style="left:635px;top:275.500px;width:111px;height:10.500px;"></div>
<span class="t" style="left:656.00px;top:277.50px;font-size:7.50px;color:#e4e4e4;transform:scaleX(0.988);transform-origin:0 50%;">Advanced Settings...</span>
<div class="ln" style="left:586.500px;top:292.500px;width:188.500px;"></div>
<span class="t" style="left:607.32px;top:299.80px;font-size:7.50px;color:#cfcfcf;transform:scaleX(0.922);transform-origin:100% 50%;">Stage:</span>
<div class="a" style="left:636px;top:298px;width:18.5px;height:9px;background:#ffffff;border:1px solid #2b2a2c;"></div>
<div class="hdr" style="left:586.500px;top:314.500px;width:188.500px;"></div>
<svg style="left:590.5px;top:318.5px;" width="5.500" height="3.500" viewBox="0 0 5.500 3.500"><path d="M0 0h5.500L2.750 3.500z" fill="#dcdcdc"/></svg>
<span class="t" style="left:599.50px;top:316.80px;font-size:7.50px;color:#e2e2e2;transform:scaleX(0.915);transform-origin:0 50%;">SWF History</span>
<div class="btn" style="left:619px;top:329px;width:22.500px;height:10.500px;background:#454446;box-shadow:none;border-color:#343335;"></div>
<span class="t" style="left:623.00px;top:331.20px;font-size:7.50px;color:#7c7b7e;">Log</span>
<div class="btn" style="left:689.500px;top:329px;width:30.500px;height:10.500px;"></div>
<span class="t" style="left:696.00px;top:331.20px;font-size:7.50px;color:#e8e8e8;transform:scaleX(1.004);transform-origin:0 50%;">Clear</span>
<span class="t" style="left:608.00px;top:346.10px;font-size:7.50px;color:#dedede;transform:scaleX(1.009);transform-origin:0 50%;">111.2 KB</span>
<span class="t" style="left:654.50px;top:346.10px;font-size:7.50px;color:#dedede;transform:scaleX(1.127);transform-origin:0 50%;">2/2/16</span>
<span class="t" style="left:689.00px;top:346.10px;font-size:7.50px;color:#dedede;transform:scaleX(0.968);transform-origin:0 50%;">6:11 PM</span>
<div class="ln" style="left:586.500px;top:389.500px;width:188.500px;background:#2c2b2d;"></div>
<div class="hdr" style="left:586.500px;top:390.500px;width:188.500px;"></div>
<svg style="left:591.500px;top:393.300px;" width="3.500" height="5.500" viewBox="0 0 3.500 5.500"><path d="M0 0v5.500L3.500 2.750z" fill="#dcdcdc"/></svg>
<span class="t" style="left:599.50px;top:392.80px;font-size:7.50px;color:#e2e2e2;transform:scaleX(0.992);transform-origin:0 50%;">Accessibility</span>
<div class="a" style="left:775px;top:47px;width:2px;height:403px;background:#2a292b;"></div>
<div class="a" style="left:777px;top:47px;width:23px;height:403px;background:#444345;"></div>
<div class="a" style="left:777px;top:47px;width:23px;height:12px;background:#2d2c2e;"></div>
<svg style="left:789px;top:51px;" width="8" height="5" viewBox="0 0 8 5"><path d="M0 1.500h2.400L1.200 3z" fill="#9a9a9a"/><path d="M3 .5h5M3 2.500h5M3 4.500h5" stroke="#9a9a9a" stroke-width=".9"/></svg>
<svg style="left:784px;top:64px;" width="8" height="11.5" viewBox="0 0 8 11.500"><path d="M.7 .8v8.400l2.100-1.900 1.600 3.500 1.300-.6-1.600-3.400h2.900z" fill="#38373a" stroke="#d2d2d2" stroke-width="1"/></svg>
<svg style="left:784px;top:81.5px;" width="8" height="11.5" viewBox="0 0 8 11.500"><path d="M.5 .3v9.200l2.300-2.100 1.600 3.700 1.500-.7-1.600-3.600h3.100z" fill="#d2d2d2"/></svg>
<div class="a" style="left:778px;top:97px;width:19.5px;height:14.8px;background:#242325;border-radius:1.500px;border:1px solid #1c1b1d;"></div>
<svg style="left:781.5px;top:100px;" width="13" height="9" viewBox="0 0 13 9"><path d="M0 0v7l1.900-1.600 1.200 2.500 1.100-.5-1.200-2.500h2.300z" fill="#d2d2d2"/><g fill="#d2d2d2"><rect x="5" y=".3" width="1.500" height="1.300"/><rect x="7.600" y=".3" width="1.500" height="1.300"/><rect x="10.500" y=".3" width="1.800" height="1.500"/><rect x="10.500" y="3.700" width="1.800" height="1.500"/><rect x="4.600" y="7.300" width="1.500" height="1.300"/><rect x="7.400" y="7.300" width="1.500" height="1.300"/><rect x="10.500" y="7.200" width="1.800" height="1.500"/></g></svg>
<div class="a" style="left:794.5px;top:109px;width:1.6px;height:1.6px;background:#d8d8d8;border-radius:50%;"></div>
<svg style="left:782px;top:116.5px;" width="11.5" height="11.5" viewBox="0 0 11.500 11.500"><path d="M5.750 0L11.500 5.750 5.750 11.500 0 5.750z" fill="#a3a2a4"/><path d="M5.750 0L11.500 5.750H0z" fill="#d2d2d2"/><path d="M5.750 0v11.500M0 5.750h11.500" stroke="#777" stroke-width=".5"/></svg>
<div class="a" style="left:794.5px;top:127.5px;width:1.6px;height:1.6px;background:#d8d8d8;border-radius:50%;"></div>
<svg style="left:782px;top:135px;" width="11.5" height="10" viewBox="0 0 11.500 10"><ellipse cx="6" cy="3.800" rx="5" ry="3.100" fill="none" stroke="#d2d2d2" stroke-width="1.200" transform="rotate(-12 6 3.800)"/><path d="M2.500 6.200c-.8 1 .2 2 1.200 3.300" stroke="#d2d2d2" stroke-width="1" fill="none"/></svg>
<div class="a" style="left:794.5px;top:145px;width:1.6px;height:1.6px;background:#d8d8d8;border-radius:50%;"></div>
<div class="a" style="left:779px;top:150px;width:19px;height:1px;background:#343335;"></div>
<svg style="left:782.5px;top:155px;" width="10.5" height="9.5" viewBox="0 0 10.500 9.500"><path d="M0 9.500l1.200-5.200L6 2.200l2.400 2.400-2.200 4.700z" fill="#d2d2d2"/><path d="M6.600 1.500L8 .1l2.400 2.400L9 3.900z" fill="#d2d2d2"/><path d="M.4 9.100L4 5.500" stroke="#444" stroke-width=".7"/><circle cx="4.300" cy="5.200" r=".8" fill="#444"/></svg>
<div class="a" style="left:794.5px;top:165px;width:1.6px;height:1.6px;background:#d8d8d8;border-radius:50%;"></div>
<span class="t" style="left:783.300px;top:170.500px;font-family:'Liberation Serif',serif;font-size:13px;color:#d2d2d2;">T</span>
<svg style="left:783px;top:190px;" width="9.5" height="9.5" viewBox="0 0 9.500 9.500"><path d="M.3 9.200L9.200 .3" stroke="#d2d2d2" stroke-width="1.100"/></svg>
<div class="a" style="left:783px;top:208px;width:9.5px;height:8px;background:#8d8c8e;border:1px solid #c4c4c4;"></div>
<div class="a" style="left:794.5px;top:217px;width:1.6px;height:1.6px;background:#d8d8d8;border-radius:50%;"></div>
<svg style="left:782px;top:226px;" width="11" height="7.5" viewBox="0 0 11 7.500"><ellipse cx="5.500" cy="3.750" rx="5" ry="3.300" fill="#8d8c8e" stroke="#c4c4c4" stroke-width=".9"/></svg>
<div class="a" style="left:794.5px;top:235px;width:1.6px;height:1.6px;background:#d8d8d8;border-radius:50%;"></div>
<svg style="left:783px;top:243px;" width="9.5" height="8.5" viewBox="0 0 9.500 8.500"><path d="M2.500 .4h4.500L9.100 4.250 7 8.100H2.500L.4 4.250z" fill="#8d8c8e" stroke="#c4c4c4" stroke-width=".9"/></svg>
<svg style="left:782.5px;top:260px;" width="10.5" height="9.5" viewBox="0 0 10.500 9.500"><path d="M7.800 0a1.700 1.700 0 0 1 2.400 2.400L3.200 8.600 0 9.500l1-3z" fill="#d2d2d2"/><path d="M7 1l2.300 2.300" stroke="#555" stroke-width=".6"/></svg>
<svg style="left:781px;top:277px;" width="13" height="10" viewBox="0 0 13 10"><path d="M12.500 .3L6.300 6.200" stroke="#d2d2d2" stroke-width="1.300"/><path d="M3.600 7.300c.5-1.300 2-1.800 3-.8.800.9.300 2.300-1 2.800-1.200.4-2.400.2-3.100-.5.700-.2.900-.8 1.100-1.500z" fill="#d2d2d2"/><path d="M5 1.800C2.500 2 .4 4 .8 6.500" fill="none" stroke="#d2d2d2" stroke-width=".9"/></svg>
<svg style="left:782px;top:294.5px;" width="11" height="10.5" viewBox="0 0 11 10.500"><path d="M10.700 .3L4.500 6.500" stroke="#d2d2d2" stroke-width="1.300"/><path d="M1.800 7.600c.5-1.300 2-1.800 3-.8.800.9.300 2.300-1 2.800-1.300.5-2.700.3-3.500-.5.800-.1 1.200-.7 1.500-1.500z" fill="#d2d2d2"/></svg>
<div class="a" style="left:779px;top:309px;width:19px;height:1px;background:#343335;"></div>
<svg style="left:782px;top:315px;" width="11" height="10.5" viewBox="0 0 11 10.500"><path d="M2.500 8.500L8.500 2.300" stroke="#d2d2d2" stroke-width="1.600"/><circle cx="1.800" cy="7.600" r="1.400" fill="#d2d2d2"/><circle cx="3" cy="9" r="1.400" fill="#d2d2d2"/><circle cx="8" cy="1.500" r="1.400" fill="#d2d2d2"/><circle cx="9.400" cy="2.900" r="1.400" fill="#d2d2d2"/></svg>
<div class="a" style="left:794.5px;top:326px;width:1.6px;height:1.6px;background:#d8d8d8;border-radius:50%;"></div>
<svg style="left:782px;top:331px;" width="11" height="11" viewBox="0 0 11 11"><path d="M3.500 3.300L.8 7.200l4.600 3.300L8.800 6z" fill="#d2d2d2"/><path d="M3.300 4.200V1.600a1.300 1.300 0 0 1 2.600 0v2.800" fill="none" stroke="#d2d2d2" stroke-width=".9"/><path d="M8.500 5.500c1.400.6 2.200 1.800 2.200 3.400 0 1-1.400 1-1.400 0 0-1-.2-1.800-.9-2.500z" fill="#d2d2d2"/></svg>
<svg style="left:781px;top:349px;" width="13" height="11" viewBox="0 0 13 11"><path d="M3 2.800L.6 6.200l3.900 2.800L7.400 5z" fill="#d2d2d2"/><path d="M2.800 3.500V1.500a1.100 1.100 0 0 1 2.200 0v2.300" fill="none" stroke="#d2d2d2" stroke-width=".8"/><path d="M7.500 6h4.700v4.500H8" fill="none" stroke="#d2d2d2" stroke-width="1.200"/><path d="M8.600 8.800L6.600 10.500l2 1.500z" fill="#d2d2d2" transform="translate(0 -.9)"/></svg>
<svg style="left:783px;top:367.5px;" width="10" height="10" viewBox="0 0 10 10"><path d="M.3 9.700l.6-2L5.500 3 7 4.500 2.300 9.100z" fill="none" stroke="#d2d2d2" stroke-width=".9"/><path d="M5 2l3 3 .8-.8-.7-.7 1.500-1.500a1.200 1.200 0 0 0-1.700-1.700L6.500 1.800l-.7-.7z" fill="#d2d2d2"/></svg>
<svg style="left:783px;top:385px;" width="10.5" height="9" viewBox="0 0 10.500 9"><path d="M3.800 .5h6.400L6.700 5.500H.3z" fill="#d2d2d2"/><path d="M.3 5.500h6.400v3H.3zM6.700 5.500L10.200 .5v3L6.700 8.500z" fill="#a9a8aa"/></svg>
<svg style="left:782px;top:402.5px;" width="12" height="9.5" viewBox="0 0 12 9.500"><path d="M.5 8.500C3 8 3.500 5.500 5 4.500S9 4 11.500 3.500" fill="none" stroke="#d2d2d2" stroke-width="1.600"/><path d="M3 .5C4.500 2 5 3 5 4.500S4 8 4.500 9.300" fill="none" stroke="#d2d2d2" stroke-width="1"/><path d="M8 1.500c.5 1.500 2 2.500 3.500 2" fill="none" stroke="#d2d2d2" stroke-width=".9"/></svg>
<div class="a" style="left:779px;top:417px;width:19px;height:1px;background:#343335;"></div>
<svg style="left:782px;top:422px;" width="11" height="10.5" viewBox="0 0 11 10.500"><path d="M2.200 5.500V2a.7.700 0 0 1 1.400 0v3h.4V.9a.7.700 0 0 1 1.400 0V5h.4V1.500a.7.700 0 0 1 1.400 0V5.500h.4V3a.7.700 0 0 1 1.400 0v4c0 2-1.200 3.500-3.500 3.500S3.300 9.500 2.400 8.300L.3 5.600c-.5-.7.500-1.500 1.100-.8z" fill="#d2d2d2"/></svg>
<div class="a" style="left:794.5px;top:433px;width:1.6px;height:1.6px;background:#d8d8d8;border-radius:50%;"></div>
<svg style="left:783px;top:439.5px;" width="10.5" height="10.5" viewBox="0 0 10.500 10.500"><circle cx="4" cy="4" r="3.300" fill="#8d8c8e" stroke="#d2d2d2" stroke-width="1.100"/><path d="M6.500 6.500L10 10" stroke="#d2d2d2" stroke-width="1.800"/></svg>
<div class="a" style="left:396px;top:48.2px;width:1.8px;height:401.8px;background:#2a292b;"></div>
</div></body></html>
